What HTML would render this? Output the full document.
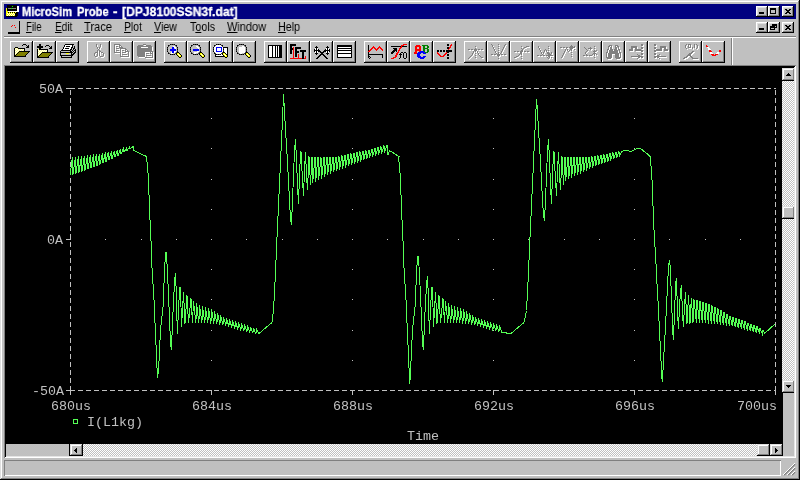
<!DOCTYPE html>
<html><head><meta charset="utf-8"><title>MicroSim Probe</title>
<style>
*{margin:0;padding:0;box-sizing:border-box}
html,body{width:800px;height:480px;overflow:hidden;background:#c0c0c0}
body{position:relative;font-family:"Liberation Sans",sans-serif;font-size:12.5px;color:#000}
.a{position:absolute}
.t{position:absolute;white-space:nowrap;transform-origin:0 0;line-height:1;will-change:transform}
.btn{position:absolute;background:#c0c0c0;box-shadow:inset -1px -1px 0 #000,inset 1px 1px 0 #fff,inset -2px -2px 0 #808080,inset 2px 2px 0 #dfdfdf}
.tb{position:absolute;top:41px;width:23px;height:22px;background:#c0c0c0;box-shadow:inset -1px -1px 0 #000,inset 1px 1px 0 #fff,inset -2px -2px 0 #808080}
.tb svg{position:absolute;left:4px;top:3px;width:16px;height:15px;overflow:visible}
.sb{position:absolute;background:#c0c0c0;box-shadow:inset -1px -1px 0 #000,inset 1px 1px 0 #dfdfdf,inset -2px -2px 0 #808080,inset 2px 2px 0 #fff}
.dither{position:absolute;background-color:#fff;background-image:conic-gradient(#c0c0c0 25%,#fff 0 50%,#c0c0c0 0 75%,#fff 0);background-size:2px 2px}
u{text-decoration:underline;text-underline-offset:1px}
.p{font-family:"Liberation Mono",monospace;font-size:13.33px;color:#c0c0c0}
</style></head>
<body>
<div class="a" style="left:0;top:0;width:800px;height:480px;box-shadow:inset -1px -1px 0 #000,inset 1px 1px 0 #dfdfdf,inset -2px -2px 0 #808080,inset 2px 2px 0 #fff"></div>
<div class="a" style="left:4px;top:4px;width:792px;height:15px;background:#000080"></div>
<svg class="a" style="left:5px;top:4px" width="15" height="14" viewBox="0 0 15 14" shape-rendering="crispEdges"><rect x="2" y="1" width="10" height="1" fill="#000"/><rect x="2" y="2" width="5" height="1" fill="#000"/><rect x="7" y="2" width="1" height="1" fill="#00ff00"/><rect x="8" y="2" width="4" height="1" fill="#000"/><rect x="12" y="2" width="2" height="1" fill="#fff"/><rect x="2" y="3" width="10" height="1" fill="#000"/><rect x="12" y="3" width="2" height="1" fill="#fff"/><rect x="1" y="4" width="1" height="1" fill="#ffff00"/><rect x="2" y="4" width="1" height="1" fill="#000"/><rect x="3" y="4" width="3" height="1" fill="#808080"/><rect x="6" y="4" width="1" height="1" fill="#00ff00"/><rect x="7" y="4" width="4" height="1" fill="#808080"/><rect x="11" y="4" width="1" height="1" fill="#000"/><rect x="12" y="4" width="2" height="1" fill="#fff"/><rect x="1" y="5" width="1" height="1" fill="#ffff00"/><rect x="2" y="5" width="10" height="1" fill="#000"/><rect x="12" y="5" width="2" height="1" fill="#fff"/><rect x="1" y="6" width="1" height="1" fill="#ffff00"/><rect x="2" y="6" width="10" height="1" fill="#000"/><rect x="12" y="6" width="2" height="1" fill="#fff"/><rect x="1" y="7" width="2" height="1" fill="#ffff00"/><rect x="3" y="7" width="11" height="1" fill="#fff"/><rect x="1" y="8" width="2" height="1" fill="#ffff00"/><rect x="3" y="8" width="1" height="1" fill="#000"/><rect x="4" y="8" width="1" height="1" fill="#ffff00"/><rect x="5" y="8" width="1" height="1" fill="#000"/><rect x="6" y="8" width="1" height="1" fill="#ffff00"/><rect x="7" y="8" width="1" height="1" fill="#000"/><rect x="8" y="8" width="1" height="1" fill="#ffff00"/><rect x="9" y="8" width="1" height="1" fill="#000"/><rect x="10" y="8" width="1" height="1" fill="#ffff00"/><rect x="11" y="8" width="2" height="1" fill="#000"/><rect x="1" y="9" width="1" height="1" fill="#ffff00"/><rect x="2" y="9" width="1" height="1" fill="#fff"/><rect x="3" y="9" width="1" height="1" fill="#ffff00"/><rect x="4" y="9" width="1" height="1" fill="#fff"/><rect x="5" y="9" width="1" height="1" fill="#ffff00"/><rect x="6" y="9" width="1" height="1" fill="#fff"/><rect x="7" y="9" width="1" height="1" fill="#ffff00"/><rect x="8" y="9" width="1" height="1" fill="#fff"/><rect x="9" y="9" width="1" height="1" fill="#ffff00"/><rect x="10" y="9" width="3" height="1" fill="#000"/><rect x="1" y="10" width="2" height="1" fill="#ffff00"/><rect x="3" y="10" width="1" height="1" fill="#fff"/><rect x="4" y="10" width="1" height="1" fill="#ffff00"/><rect x="5" y="10" width="1" height="1" fill="#fff"/><rect x="6" y="10" width="1" height="1" fill="#ffff00"/><rect x="7" y="10" width="1" height="1" fill="#fff"/><rect x="8" y="10" width="1" height="1" fill="#ffff00"/><rect x="9" y="10" width="1" height="1" fill="#fff"/><rect x="10" y="10" width="3" height="1" fill="#000"/><rect x="1" y="11" width="1" height="1" fill="#ffff00"/><rect x="2" y="11" width="1" height="1" fill="#fff"/><rect x="3" y="11" width="1" height="1" fill="#ffff00"/><rect x="4" y="11" width="1" height="1" fill="#fff"/><rect x="5" y="11" width="1" height="1" fill="#ffff00"/><rect x="6" y="11" width="1" height="1" fill="#fff"/><rect x="7" y="11" width="1" height="1" fill="#ffff00"/><rect x="8" y="11" width="1" height="1" fill="#fff"/><rect x="9" y="11" width="1" height="1" fill="#ffff00"/><rect x="10" y="11" width="3" height="1" fill="#000"/><rect x="1" y="12" width="11" height="1" fill="#000"/></svg>
<div class="t" style="left:21.8px;top:6px;color:#fff;font-weight:bold;font-size:12.5px;-webkit-text-stroke:0.3px #fff;transform:scaleX(0.8886)">MicroSim</div>
<div class="t" style="left:77.3px;top:6px;color:#fff;font-weight:bold;font-size:12.5px;-webkit-text-stroke:0.3px #fff;transform:scaleX(0.8945)">Probe</div>
<div class="t" style="left:112.5px;top:6px;color:#fff;font-weight:bold;font-size:12.5px;-webkit-text-stroke:0.3px #fff;transform:scaleX(1.0791)">-</div>
<div class="t" style="left:122.3px;top:6px;color:#fff;font-weight:bold;font-size:12.5px;-webkit-text-stroke:0.3px #fff;transform:scaleX(0.9682)">[DPJ8100SSN3f.dat]</div>
<div class="btn" style="left:756px;top:6px;width:12px;height:11px"><div class="a" style="left:3px;top:6px;width:5px;height:2px;background:#000"></div></div>
<div class="btn" style="left:768px;top:6px;width:12px;height:11px"><div class="a" style="left:2px;top:2px;width:6px;height:6px;border:1px solid #000;border-top-width:2px"></div></div>
<div class="btn" style="left:782px;top:6px;width:12px;height:11px"><svg class="a" style="left:3px;top:3px" width="6" height="5" viewBox="0 0 6 5" shape-rendering="crispEdges"><path d="M0 0h2v1h-2zM4 0h2v1h-2zM1 1h4v1h-4zM2 2h2v1h-2zM1 3h4v1h-4zM0 4h2v1h-2zM4 4h2v1h-2z" fill="#000"/></svg></div>
<div class="btn" style="left:756px;top:22px;width:12px;height:11px"><div class="a" style="left:3px;top:6px;width:5px;height:2px;background:#000"></div></div>
<div class="btn" style="left:768px;top:22px;width:12px;height:11px"><div class="a" style="left:4px;top:2px;width:5px;height:4px;border:1px solid #000;border-top-width:2px"></div><div class="a" style="left:2px;top:4px;width:5px;height:4px;border:1px solid #000;border-top-width:2px;background:#c0c0c0"></div></div>
<div class="btn" style="left:782px;top:22px;width:12px;height:11px"><svg class="a" style="left:3px;top:3px" width="6" height="5" viewBox="0 0 6 5" shape-rendering="crispEdges"><path d="M0 0h2v1h-2zM4 0h2v1h-2zM1 1h4v1h-4zM2 2h2v1h-2zM1 3h4v1h-4zM0 4h2v1h-2zM4 4h2v1h-2z" fill="#000"/></svg></div>
<svg class="a" style="left:6px;top:20px" width="15" height="15" viewBox="0 0 15 15" shape-rendering="crispEdges">
<rect x="13" y="1" width="1" height="13" fill="#000"/><rect x="2" y="12" width="12" height="2" fill="#000"/>
<rect x="5" y="6" width="1" height="1" fill="#f00"/><rect x="6" y="5" width="1" height="1" fill="#f00"/><rect x="8" y="5" width="1" height="1" fill="#f00"/><rect x="9" y="7" width="1" height="1" fill="#f00"/>
</svg>
<div class="t m" id="m0" style="left:26.4px;top:21px;transform:scaleX(0.7688)"><u>F</u>ile</div>
<div class="t m" id="m1" style="left:54.5px;top:21px;transform:scaleX(0.8121)"><u>E</u>dit</div>
<div class="t m" id="m2" style="left:84px;top:21px;transform:scaleX(0.8889)"><u>T</u>race</div>
<div class="t m" id="m3" style="left:124.3px;top:21px;transform:scaleX(0.8353)"><u>P</u>lot</div>
<div class="t m" id="m4" style="left:154px;top:21px;transform:scaleX(0.8557)"><u>V</u>iew</div>
<div class="t m" id="m5" style="left:190px;top:21px;transform:scaleX(0.8565)">T<u>o</u>ols</div>
<div class="t m" id="m6" style="left:227px;top:21px;transform:scaleX(0.8770)"><u>W</u>indow</div>
<div class="t m" id="m7" style="left:278px;top:21px;transform:scaleX(0.8554)"><u>H</u>elp</div>
<div class="a" style="left:4px;top:36px;width:792px;height:1px;background:#808080"></div><div class="a" style="left:4px;top:37px;width:792px;height:1px;background:#fff"></div>
<div class="a" style="left:731px;top:38px;width:1px;height:27px;background:#808080"></div><div class="a" style="left:732px;top:38px;width:1px;height:27px;background:#fff"></div>
<div class="tb" style="left:10px"><svg viewBox="0 0 16 15" shape-rendering="crispEdges"><rect x="9" y="0" width="3" height="1" fill="#000"/><rect x="8" y="1" width="1" height="1" fill="#000"/><rect x="12" y="1" width="1" height="1" fill="#000"/><rect x="14" y="1" width="1" height="1" fill="#000"/><rect x="13" y="2" width="2" height="1" fill="#000"/><rect x="1" y="3" width="3" height="1" fill="#000"/><rect x="12" y="3" width="3" height="1" fill="#000"/><rect x="0" y="4" width="1" height="1" fill="#000"/><rect x="1" y="4" width="1" height="1" fill="#ffff80"/><rect x="2" y="4" width="1" height="1" fill="#fff"/><rect x="3" y="4" width="1" height="1" fill="#ffff80"/><rect x="4" y="4" width="7" height="1" fill="#000"/><rect x="0" y="5" width="1" height="1" fill="#000"/><rect x="1" y="5" width="1" height="1" fill="#fff"/><rect x="2" y="5" width="1" height="1" fill="#ffff80"/><rect x="3" y="5" width="1" height="1" fill="#fff"/><rect x="4" y="5" width="1" height="1" fill="#ffff80"/><rect x="5" y="5" width="1" height="1" fill="#fff"/><rect x="6" y="5" width="1" height="1" fill="#ffff80"/><rect x="7" y="5" width="1" height="1" fill="#fff"/><rect x="8" y="5" width="1" height="1" fill="#ffff80"/><rect x="9" y="5" width="1" height="1" fill="#fff"/><rect x="10" y="5" width="1" height="1" fill="#000"/><rect x="0" y="6" width="1" height="1" fill="#000"/><rect x="1" y="6" width="1" height="1" fill="#ffff80"/><rect x="2" y="6" width="1" height="1" fill="#fff"/><rect x="3" y="6" width="1" height="1" fill="#ffff80"/><rect x="4" y="6" width="1" height="1" fill="#fff"/><rect x="5" y="6" width="1" height="1" fill="#ffff80"/><rect x="6" y="6" width="1" height="1" fill="#fff"/><rect x="7" y="6" width="1" height="1" fill="#ffff80"/><rect x="8" y="6" width="1" height="1" fill="#fff"/><rect x="9" y="6" width="1" height="1" fill="#ffff80"/><rect x="10" y="6" width="1" height="1" fill="#000"/><rect x="0" y="7" width="1" height="1" fill="#000"/><rect x="1" y="7" width="1" height="1" fill="#fff"/><rect x="2" y="7" width="1" height="1" fill="#ffff80"/><rect x="3" y="7" width="1" height="1" fill="#fff"/><rect x="4" y="7" width="1" height="1" fill="#ffff80"/><rect x="5" y="7" width="11" height="1" fill="#000"/><rect x="0" y="8" width="1" height="1" fill="#000"/><rect x="1" y="8" width="1" height="1" fill="#ffff80"/><rect x="2" y="8" width="1" height="1" fill="#fff"/><rect x="3" y="8" width="1" height="1" fill="#ffff80"/><rect x="4" y="8" width="1" height="1" fill="#000"/><rect x="5" y="8" width="9" height="1" fill="#808000"/><rect x="14" y="8" width="1" height="1" fill="#000"/><rect x="0" y="9" width="1" height="1" fill="#000"/><rect x="1" y="9" width="1" height="1" fill="#fff"/><rect x="2" y="9" width="1" height="1" fill="#ffff80"/><rect x="3" y="9" width="1" height="1" fill="#000"/><rect x="4" y="9" width="9" height="1" fill="#808000"/><rect x="13" y="9" width="1" height="1" fill="#000"/><rect x="0" y="10" width="1" height="1" fill="#000"/><rect x="1" y="10" width="1" height="1" fill="#ffff80"/><rect x="2" y="10" width="1" height="1" fill="#000"/><rect x="3" y="10" width="9" height="1" fill="#808000"/><rect x="12" y="10" width="1" height="1" fill="#000"/><rect x="0" y="11" width="2" height="1" fill="#000"/><rect x="2" y="11" width="9" height="1" fill="#808000"/><rect x="11" y="11" width="1" height="1" fill="#000"/><rect x="0" y="12" width="12" height="1" fill="#000"/></svg></div>
<div class="tb" style="left:33px"><svg viewBox="0 0 16 15" shape-rendering="crispEdges"><rect x="2" y="0" width="2" height="1" fill="#000"/><rect x="2" y="1" width="2" height="1" fill="#000"/><rect x="9" y="1" width="3" height="1" fill="#000"/><rect x="0" y="2" width="6" height="1" fill="#000"/><rect x="8" y="2" width="1" height="1" fill="#000"/><rect x="12" y="2" width="1" height="1" fill="#000"/><rect x="14" y="2" width="1" height="1" fill="#000"/><rect x="0" y="3" width="6" height="1" fill="#000"/><rect x="13" y="3" width="2" height="1" fill="#000"/><rect x="2" y="4" width="2" height="1" fill="#000"/><rect x="12" y="4" width="3" height="1" fill="#000"/><rect x="0" y="5" width="1" height="1" fill="#000"/><rect x="1" y="5" width="1" height="1" fill="#ffff80"/><rect x="2" y="5" width="9" height="1" fill="#000"/><rect x="0" y="6" width="1" height="1" fill="#000"/><rect x="1" y="6" width="1" height="1" fill="#fff"/><rect x="2" y="6" width="1" height="1" fill="#ffff80"/><rect x="3" y="6" width="1" height="1" fill="#fff"/><rect x="4" y="6" width="1" height="1" fill="#ffff80"/><rect x="5" y="6" width="1" height="1" fill="#fff"/><rect x="6" y="6" width="1" height="1" fill="#ffff80"/><rect x="7" y="6" width="1" height="1" fill="#fff"/><rect x="8" y="6" width="1" height="1" fill="#ffff80"/><rect x="9" y="6" width="1" height="1" fill="#fff"/><rect x="10" y="6" width="1" height="1" fill="#000"/><rect x="0" y="7" width="1" height="1" fill="#000"/><rect x="1" y="7" width="1" height="1" fill="#ffff80"/><rect x="2" y="7" width="1" height="1" fill="#fff"/><rect x="3" y="7" width="1" height="1" fill="#ffff80"/><rect x="4" y="7" width="1" height="1" fill="#fff"/><rect x="5" y="7" width="1" height="1" fill="#ffff80"/><rect x="6" y="7" width="1" height="1" fill="#fff"/><rect x="7" y="7" width="1" height="1" fill="#ffff80"/><rect x="8" y="7" width="1" height="1" fill="#fff"/><rect x="9" y="7" width="1" height="1" fill="#ffff80"/><rect x="10" y="7" width="1" height="1" fill="#000"/><rect x="0" y="8" width="1" height="1" fill="#000"/><rect x="1" y="8" width="1" height="1" fill="#fff"/><rect x="2" y="8" width="1" height="1" fill="#ffff80"/><rect x="3" y="8" width="1" height="1" fill="#fff"/><rect x="4" y="8" width="1" height="1" fill="#ffff80"/><rect x="5" y="8" width="11" height="1" fill="#000"/><rect x="0" y="9" width="1" height="1" fill="#000"/><rect x="1" y="9" width="1" height="1" fill="#ffff80"/><rect x="2" y="9" width="1" height="1" fill="#fff"/><rect x="3" y="9" width="1" height="1" fill="#ffff80"/><rect x="4" y="9" width="1" height="1" fill="#000"/><rect x="5" y="9" width="9" height="1" fill="#808000"/><rect x="14" y="9" width="1" height="1" fill="#000"/><rect x="0" y="10" width="1" height="1" fill="#000"/><rect x="1" y="10" width="1" height="1" fill="#fff"/><rect x="2" y="10" width="1" height="1" fill="#ffff80"/><rect x="3" y="10" width="1" height="1" fill="#000"/><rect x="4" y="10" width="9" height="1" fill="#808000"/><rect x="13" y="10" width="1" height="1" fill="#000"/><rect x="0" y="11" width="1" height="1" fill="#000"/><rect x="1" y="11" width="1" height="1" fill="#ffff80"/><rect x="2" y="11" width="1" height="1" fill="#000"/><rect x="3" y="11" width="9" height="1" fill="#808000"/><rect x="12" y="11" width="1" height="1" fill="#000"/><rect x="0" y="12" width="2" height="1" fill="#000"/><rect x="2" y="12" width="9" height="1" fill="#808000"/><rect x="11" y="12" width="1" height="1" fill="#000"/><rect x="0" y="13" width="12" height="1" fill="#000"/></svg></div>
<div class="tb" style="left:56px"><svg viewBox="0 0 16 15" shape-rendering="crispEdges"><rect x="5" y="0" width="9" height="1" fill="#000"/><rect x="4" y="1" width="1" height="1" fill="#000"/><rect x="5" y="1" width="7" height="1" fill="#fff"/><rect x="12" y="1" width="1" height="1" fill="#000"/><rect x="4" y="2" width="1" height="1" fill="#000"/><rect x="5" y="2" width="1" height="1" fill="#fff"/><rect x="6" y="2" width="4" height="1" fill="#000"/><rect x="10" y="2" width="2" height="1" fill="#fff"/><rect x="12" y="2" width="1" height="1" fill="#000"/><rect x="14" y="2" width="1" height="1" fill="#000"/><rect x="3" y="3" width="1" height="1" fill="#000"/><rect x="4" y="3" width="7" height="1" fill="#fff"/><rect x="11" y="3" width="2" height="1" fill="#000"/><rect x="13" y="3" width="1" height="1" fill="#c0c0c0"/><rect x="14" y="3" width="1" height="1" fill="#000"/><rect x="3" y="4" width="1" height="1" fill="#000"/><rect x="4" y="4" width="1" height="1" fill="#fff"/><rect x="5" y="4" width="4" height="1" fill="#000"/><rect x="9" y="4" width="2" height="1" fill="#fff"/><rect x="11" y="4" width="1" height="1" fill="#000"/><rect x="12" y="4" width="1" height="1" fill="#c0c0c0"/><rect x="13" y="4" width="2" height="1" fill="#000"/><rect x="2" y="5" width="1" height="1" fill="#000"/><rect x="3" y="5" width="7" height="1" fill="#fff"/><rect x="10" y="5" width="2" height="1" fill="#000"/><rect x="12" y="5" width="1" height="1" fill="#c0c0c0"/><rect x="13" y="5" width="1" height="1" fill="#000"/><rect x="14" y="5" width="1" height="1" fill="#c0c0c0"/><rect x="15" y="5" width="1" height="1" fill="#000"/><rect x="1" y="6" width="10" height="1" fill="#000"/><rect x="11" y="6" width="1" height="1" fill="#c0c0c0"/><rect x="12" y="6" width="1" height="1" fill="#000"/><rect x="13" y="6" width="1" height="1" fill="#c0c0c0"/><rect x="14" y="6" width="2" height="1" fill="#000"/><rect x="0" y="7" width="1" height="1" fill="#000"/><rect x="1" y="7" width="9" height="1" fill="#c0c0c0"/><rect x="10" y="7" width="2" height="1" fill="#000"/><rect x="12" y="7" width="1" height="1" fill="#c0c0c0"/><rect x="13" y="7" width="1" height="1" fill="#000"/><rect x="14" y="7" width="1" height="1" fill="#c0c0c0"/><rect x="15" y="7" width="1" height="1" fill="#000"/><rect x="0" y="8" width="13" height="1" fill="#000"/><rect x="13" y="8" width="1" height="1" fill="#c0c0c0"/><rect x="14" y="8" width="2" height="1" fill="#000"/><rect x="0" y="9" width="1" height="1" fill="#000"/><rect x="1" y="9" width="5" height="1" fill="#c0c0c0"/><rect x="6" y="9" width="3" height="1" fill="#ffff00"/><rect x="9" y="9" width="2" height="1" fill="#c0c0c0"/><rect x="11" y="9" width="1" height="1" fill="#000"/><rect x="12" y="9" width="1" height="1" fill="#c0c0c0"/><rect x="13" y="9" width="2" height="1" fill="#000"/><rect x="0" y="10" width="1" height="1" fill="#000"/><rect x="1" y="10" width="10" height="1" fill="#c0c0c0"/><rect x="11" y="10" width="3" height="1" fill="#000"/><rect x="0" y="11" width="13" height="1" fill="#000"/><rect x="1" y="12" width="1" height="1" fill="#000"/><rect x="2" y="12" width="9" height="1" fill="#c0c0c0"/><rect x="11" y="12" width="1" height="1" fill="#000"/><rect x="1" y="13" width="11" height="1" fill="#000"/></svg></div>
<div class="tb" style="left:87px"><svg viewBox="0 0 16 15" shape-rendering="crispEdges"><rect x="5" y="0" width="1" height="1" fill="#808080"/><rect x="9" y="0" width="1" height="1" fill="#808080"/><rect x="5" y="1" width="1" height="1" fill="#808080"/><rect x="6" y="1" width="1" height="1" fill="#fff"/><rect x="9" y="1" width="1" height="1" fill="#808080"/><rect x="10" y="1" width="1" height="1" fill="#fff"/><rect x="5" y="2" width="1" height="1" fill="#808080"/><rect x="6" y="2" width="1" height="1" fill="#fff"/><rect x="9" y="2" width="1" height="1" fill="#808080"/><rect x="10" y="2" width="1" height="1" fill="#fff"/><rect x="6" y="3" width="1" height="1" fill="#808080"/><rect x="8" y="3" width="1" height="1" fill="#808080"/><rect x="10" y="3" width="1" height="1" fill="#fff"/><rect x="6" y="4" width="1" height="1" fill="#808080"/><rect x="7" y="4" width="1" height="1" fill="#fff"/><rect x="8" y="4" width="1" height="1" fill="#808080"/><rect x="9" y="4" width="1" height="1" fill="#fff"/><rect x="7" y="5" width="1" height="1" fill="#808080"/><rect x="9" y="5" width="1" height="1" fill="#fff"/><rect x="6" y="6" width="1" height="1" fill="#808080"/><rect x="8" y="6" width="1" height="1" fill="#808080"/><rect x="6" y="7" width="1" height="1" fill="#808080"/><rect x="7" y="7" width="1" height="1" fill="#fff"/><rect x="8" y="7" width="2" height="1" fill="#808080"/><rect x="4" y="8" width="3" height="1" fill="#808080"/><rect x="7" y="8" width="1" height="1" fill="#fff"/><rect x="8" y="8" width="1" height="1" fill="#808080"/><rect x="9" y="8" width="1" height="1" fill="#fff"/><rect x="10" y="8" width="2" height="1" fill="#808080"/><rect x="3" y="9" width="1" height="1" fill="#808080"/><rect x="5" y="9" width="1" height="1" fill="#fff"/><rect x="6" y="9" width="1" height="1" fill="#808080"/><rect x="7" y="9" width="1" height="1" fill="#fff"/><rect x="8" y="9" width="1" height="1" fill="#808080"/><rect x="9" y="9" width="1" height="1" fill="#fff"/><rect x="11" y="9" width="1" height="1" fill="#fff"/><rect x="12" y="9" width="1" height="1" fill="#808080"/><rect x="3" y="10" width="1" height="1" fill="#808080"/><rect x="4" y="10" width="1" height="1" fill="#fff"/><rect x="6" y="10" width="1" height="1" fill="#808080"/><rect x="7" y="10" width="1" height="1" fill="#fff"/><rect x="8" y="10" width="1" height="1" fill="#808080"/><rect x="9" y="10" width="1" height="1" fill="#fff"/><rect x="12" y="10" width="1" height="1" fill="#808080"/><rect x="13" y="10" width="1" height="1" fill="#fff"/><rect x="3" y="11" width="1" height="1" fill="#808080"/><rect x="4" y="11" width="1" height="1" fill="#fff"/><rect x="6" y="11" width="1" height="1" fill="#808080"/><rect x="7" y="11" width="1" height="1" fill="#fff"/><rect x="8" y="11" width="1" height="1" fill="#808080"/><rect x="9" y="11" width="1" height="1" fill="#fff"/><rect x="12" y="11" width="1" height="1" fill="#808080"/><rect x="13" y="11" width="1" height="1" fill="#fff"/><rect x="4" y="12" width="2" height="1" fill="#808080"/><rect x="7" y="12" width="1" height="1" fill="#fff"/><rect x="9" y="12" width="3" height="1" fill="#808080"/><rect x="13" y="12" width="1" height="1" fill="#fff"/><rect x="5" y="13" width="2" height="1" fill="#fff"/><rect x="10" y="13" width="3" height="1" fill="#fff"/></svg></div>
<div class="tb" style="left:110px"><svg viewBox="0 0 16 15" shape-rendering="crispEdges"><rect x="0" y="0" width="6" height="1" fill="#808080"/><rect x="0" y="1" width="1" height="1" fill="#808080"/><rect x="1" y="1" width="4" height="1" fill="#fff"/><rect x="5" y="1" width="2" height="1" fill="#808080"/><rect x="0" y="2" width="1" height="1" fill="#808080"/><rect x="1" y="2" width="1" height="1" fill="#fff"/><rect x="2" y="2" width="2" height="1" fill="#808080"/><rect x="5" y="2" width="1" height="1" fill="#808080"/><rect x="6" y="2" width="1" height="1" fill="#fff"/><rect x="7" y="2" width="1" height="1" fill="#808080"/><rect x="0" y="3" width="1" height="1" fill="#808080"/><rect x="1" y="3" width="1" height="1" fill="#fff"/><rect x="3" y="3" width="2" height="1" fill="#fff"/><rect x="5" y="3" width="4" height="1" fill="#808080"/><rect x="0" y="4" width="1" height="1" fill="#808080"/><rect x="1" y="4" width="1" height="1" fill="#fff"/><rect x="2" y="4" width="3" height="1" fill="#808080"/><rect x="6" y="4" width="6" height="1" fill="#808080"/><rect x="0" y="5" width="1" height="1" fill="#808080"/><rect x="1" y="5" width="1" height="1" fill="#fff"/><rect x="3" y="5" width="3" height="1" fill="#fff"/><rect x="6" y="5" width="1" height="1" fill="#808080"/><rect x="7" y="5" width="4" height="1" fill="#fff"/><rect x="11" y="5" width="2" height="1" fill="#808080"/><rect x="0" y="6" width="1" height="1" fill="#808080"/><rect x="1" y="6" width="1" height="1" fill="#fff"/><rect x="2" y="6" width="3" height="1" fill="#808080"/><rect x="6" y="6" width="1" height="1" fill="#808080"/><rect x="7" y="6" width="1" height="1" fill="#fff"/><rect x="8" y="6" width="2" height="1" fill="#808080"/><rect x="11" y="6" width="1" height="1" fill="#808080"/><rect x="12" y="6" width="1" height="1" fill="#fff"/><rect x="13" y="6" width="1" height="1" fill="#808080"/><rect x="0" y="7" width="1" height="1" fill="#808080"/><rect x="1" y="7" width="1" height="1" fill="#fff"/><rect x="3" y="7" width="3" height="1" fill="#fff"/><rect x="6" y="7" width="1" height="1" fill="#808080"/><rect x="7" y="7" width="1" height="1" fill="#fff"/><rect x="9" y="7" width="2" height="1" fill="#fff"/><rect x="11" y="7" width="4" height="1" fill="#808080"/><rect x="0" y="8" width="7" height="1" fill="#808080"/><rect x="7" y="8" width="1" height="1" fill="#fff"/><rect x="8" y="8" width="4" height="1" fill="#808080"/><rect x="12" y="8" width="2" height="1" fill="#fff"/><rect x="14" y="8" width="1" height="1" fill="#808080"/><rect x="15" y="8" width="1" height="1" fill="#fff"/><rect x="1" y="9" width="5" height="1" fill="#fff"/><rect x="6" y="9" width="1" height="1" fill="#808080"/><rect x="7" y="9" width="1" height="1" fill="#fff"/><rect x="9" y="9" width="4" height="1" fill="#fff"/><rect x="14" y="9" width="1" height="1" fill="#808080"/><rect x="15" y="9" width="1" height="1" fill="#fff"/><rect x="6" y="10" width="1" height="1" fill="#808080"/><rect x="7" y="10" width="1" height="1" fill="#fff"/><rect x="8" y="10" width="5" height="1" fill="#808080"/><rect x="14" y="10" width="1" height="1" fill="#808080"/><rect x="15" y="10" width="1" height="1" fill="#fff"/><rect x="6" y="11" width="1" height="1" fill="#808080"/><rect x="7" y="11" width="1" height="1" fill="#fff"/><rect x="9" y="11" width="5" height="1" fill="#fff"/><rect x="14" y="11" width="1" height="1" fill="#808080"/><rect x="15" y="11" width="1" height="1" fill="#fff"/><rect x="6" y="12" width="9" height="1" fill="#808080"/><rect x="15" y="12" width="1" height="1" fill="#fff"/><rect x="7" y="13" width="9" height="1" fill="#fff"/></svg></div>
<div class="tb" style="left:133px"><svg viewBox="0 0 16 15" shape-rendering="crispEdges"><rect x="6" y="0" width="3" height="1" fill="#808080"/><rect x="1" y="1" width="5" height="1" fill="#808080"/><rect x="7" y="1" width="2" height="1" fill="#fff"/><rect x="9" y="1" width="5" height="1" fill="#808080"/><rect x="0" y="2" width="15" height="1" fill="#808080"/><rect x="0" y="3" width="4" height="1" fill="#808080"/><rect x="4" y="3" width="7" height="1" fill="#fff"/><rect x="11" y="3" width="4" height="1" fill="#808080"/><rect x="15" y="3" width="1" height="1" fill="#fff"/><rect x="0" y="4" width="15" height="1" fill="#808080"/><rect x="15" y="4" width="1" height="1" fill="#fff"/><rect x="0" y="5" width="15" height="1" fill="#808080"/><rect x="15" y="5" width="1" height="1" fill="#fff"/><rect x="0" y="6" width="15" height="1" fill="#808080"/><rect x="15" y="6" width="1" height="1" fill="#fff"/><rect x="0" y="7" width="16" height="1" fill="#808080"/><rect x="0" y="8" width="8" height="1" fill="#808080"/><rect x="8" y="8" width="5" height="1" fill="#fff"/><rect x="13" y="8" width="1" height="1" fill="#808080"/><rect x="14" y="8" width="1" height="1" fill="#fff"/><rect x="15" y="8" width="1" height="1" fill="#808080"/><rect x="16" y="8" width="1" height="1" fill="#fff"/><rect x="0" y="9" width="8" height="1" fill="#808080"/><rect x="8" y="9" width="1" height="1" fill="#fff"/><rect x="9" y="9" width="3" height="1" fill="#808080"/><rect x="13" y="9" width="3" height="1" fill="#808080"/><rect x="16" y="9" width="1" height="1" fill="#fff"/><rect x="0" y="10" width="8" height="1" fill="#808080"/><rect x="8" y="10" width="1" height="1" fill="#fff"/><rect x="10" y="10" width="3" height="1" fill="#fff"/><rect x="14" y="10" width="1" height="1" fill="#fff"/><rect x="15" y="10" width="1" height="1" fill="#808080"/><rect x="16" y="10" width="1" height="1" fill="#fff"/><rect x="0" y="11" width="8" height="1" fill="#808080"/><rect x="8" y="11" width="1" height="1" fill="#fff"/><rect x="9" y="11" width="5" height="1" fill="#808080"/><rect x="15" y="11" width="1" height="1" fill="#808080"/><rect x="16" y="11" width="1" height="1" fill="#fff"/><rect x="1" y="12" width="7" height="1" fill="#808080"/><rect x="8" y="12" width="1" height="1" fill="#fff"/><rect x="10" y="12" width="5" height="1" fill="#fff"/><rect x="15" y="12" width="1" height="1" fill="#808080"/><rect x="16" y="12" width="1" height="1" fill="#fff"/><rect x="2" y="13" width="6" height="1" fill="#fff"/><rect x="8" y="13" width="8" height="1" fill="#808080"/><rect x="16" y="13" width="1" height="1" fill="#fff"/><rect x="9" y="14" width="8" height="1" fill="#fff"/></svg></div>
<div class="tb" style="left:164px"><svg viewBox="0 0 16 15" shape-rendering="crispEdges"><g transform="translate(-1,0)"><rect x="3" y="0" width="1" height="1" fill="#000"/><rect x="4" y="0" width="1" height="1" fill="#404040"/><rect x="5" y="0" width="1" height="1" fill="#000"/><rect x="6" y="0" width="1" height="1" fill="#404040"/><rect x="7" y="0" width="1" height="1" fill="#000"/><rect x="1" y="1" width="1" height="1" fill="#000"/><rect x="2" y="1" width="1" height="1" fill="#404040"/><rect x="8" y="1" width="1" height="1" fill="#404040"/><rect x="9" y="1" width="1" height="1" fill="#000"/><rect x="1" y="2" width="1" height="1" fill="#404040"/><rect x="6" y="2" width="2" height="1" fill="#fff"/><rect x="9" y="2" width="1" height="1" fill="#404040"/><rect x="0" y="3" width="1" height="1" fill="#000"/><rect x="5" y="3" width="2" height="1" fill="#0000ff"/><rect x="7" y="3" width="2" height="1" fill="#fff"/><rect x="10" y="3" width="1" height="1" fill="#000"/><rect x="0" y="4" width="1" height="1" fill="#404040"/><rect x="5" y="4" width="2" height="1" fill="#0000ff"/><rect x="8" y="4" width="1" height="1" fill="#fff"/><rect x="10" y="4" width="1" height="1" fill="#404040"/><rect x="0" y="5" width="1" height="1" fill="#000"/><rect x="3" y="5" width="6" height="1" fill="#0000ff"/><rect x="10" y="5" width="1" height="1" fill="#000"/><rect x="0" y="6" width="1" height="1" fill="#404040"/><rect x="3" y="6" width="6" height="1" fill="#0000ff"/><rect x="10" y="6" width="1" height="1" fill="#404040"/><rect x="0" y="7" width="1" height="1" fill="#000"/><rect x="5" y="7" width="2" height="1" fill="#0000ff"/><rect x="7" y="7" width="2" height="1" fill="#fff"/><rect x="10" y="7" width="1" height="1" fill="#000"/><rect x="1" y="8" width="1" height="1" fill="#404040"/><rect x="4" y="8" width="1" height="1" fill="#fff"/><rect x="5" y="8" width="2" height="1" fill="#0000ff"/><rect x="7" y="8" width="1" height="1" fill="#fff"/><rect x="9" y="8" width="1" height="1" fill="#404040"/><rect x="10" y="8" width="2" height="1" fill="#000"/><rect x="1" y="9" width="1" height="1" fill="#000"/><rect x="2" y="9" width="1" height="1" fill="#404040"/><rect x="4" y="9" width="2" height="1" fill="#fff"/><rect x="8" y="9" width="1" height="1" fill="#404040"/><rect x="9" y="9" width="1" height="1" fill="#000"/><rect x="10" y="9" width="2" height="1" fill="#ffff00"/><rect x="12" y="9" width="1" height="1" fill="#000"/><rect x="3" y="10" width="1" height="1" fill="#000"/><rect x="4" y="10" width="1" height="1" fill="#404040"/><rect x="5" y="10" width="1" height="1" fill="#000"/><rect x="6" y="10" width="1" height="1" fill="#404040"/><rect x="7" y="10" width="1" height="1" fill="#000"/><rect x="9" y="10" width="1" height="1" fill="#000"/><rect x="10" y="10" width="1" height="1" fill="#ffff00"/><rect x="11" y="10" width="1" height="1" fill="#fff"/><rect x="12" y="10" width="1" height="1" fill="#ffff00"/><rect x="13" y="10" width="1" height="1" fill="#000"/><rect x="10" y="11" width="1" height="1" fill="#000"/><rect x="11" y="11" width="1" height="1" fill="#ffff00"/><rect x="12" y="11" width="1" height="1" fill="#fff"/><rect x="13" y="11" width="1" height="1" fill="#ffff00"/><rect x="14" y="11" width="1" height="1" fill="#000"/><rect x="11" y="12" width="1" height="1" fill="#000"/><rect x="12" y="12" width="2" height="1" fill="#ffff00"/><rect x="14" y="12" width="1" height="1" fill="#000"/><rect x="12" y="13" width="2" height="1" fill="#000"/></g></svg></div>
<div class="tb" style="left:187px"><svg viewBox="0 0 16 15" shape-rendering="crispEdges"><g transform="translate(-1,0)"><rect x="3" y="0" width="1" height="1" fill="#000"/><rect x="4" y="0" width="1" height="1" fill="#404040"/><rect x="5" y="0" width="1" height="1" fill="#000"/><rect x="6" y="0" width="1" height="1" fill="#404040"/><rect x="7" y="0" width="1" height="1" fill="#000"/><rect x="1" y="1" width="1" height="1" fill="#000"/><rect x="2" y="1" width="1" height="1" fill="#404040"/><rect x="8" y="1" width="1" height="1" fill="#404040"/><rect x="9" y="1" width="1" height="1" fill="#000"/><rect x="1" y="2" width="1" height="1" fill="#404040"/><rect x="6" y="2" width="2" height="1" fill="#fff"/><rect x="9" y="2" width="1" height="1" fill="#404040"/><rect x="0" y="3" width="1" height="1" fill="#000"/><rect x="7" y="3" width="2" height="1" fill="#fff"/><rect x="10" y="3" width="1" height="1" fill="#000"/><rect x="0" y="4" width="1" height="1" fill="#404040"/><rect x="8" y="4" width="1" height="1" fill="#fff"/><rect x="10" y="4" width="1" height="1" fill="#404040"/><rect x="0" y="5" width="1" height="1" fill="#000"/><rect x="3" y="5" width="6" height="1" fill="#0000ff"/><rect x="10" y="5" width="1" height="1" fill="#000"/><rect x="0" y="6" width="1" height="1" fill="#404040"/><rect x="3" y="6" width="6" height="1" fill="#0000ff"/><rect x="10" y="6" width="1" height="1" fill="#404040"/><rect x="0" y="7" width="1" height="1" fill="#000"/><rect x="7" y="7" width="2" height="1" fill="#fff"/><rect x="10" y="7" width="1" height="1" fill="#000"/><rect x="1" y="8" width="1" height="1" fill="#404040"/><rect x="4" y="8" width="4" height="1" fill="#fff"/><rect x="9" y="8" width="1" height="1" fill="#404040"/><rect x="10" y="8" width="2" height="1" fill="#000"/><rect x="1" y="9" width="1" height="1" fill="#000"/><rect x="2" y="9" width="1" height="1" fill="#404040"/><rect x="4" y="9" width="2" height="1" fill="#fff"/><rect x="8" y="9" width="1" height="1" fill="#404040"/><rect x="9" y="9" width="1" height="1" fill="#000"/><rect x="10" y="9" width="2" height="1" fill="#ffff00"/><rect x="12" y="9" width="1" height="1" fill="#000"/><rect x="3" y="10" width="1" height="1" fill="#000"/><rect x="4" y="10" width="1" height="1" fill="#404040"/><rect x="5" y="10" width="1" height="1" fill="#000"/><rect x="6" y="10" width="1" height="1" fill="#404040"/><rect x="7" y="10" width="1" height="1" fill="#000"/><rect x="9" y="10" width="1" height="1" fill="#000"/><rect x="10" y="10" width="1" height="1" fill="#ffff00"/><rect x="11" y="10" width="1" height="1" fill="#fff"/><rect x="12" y="10" width="1" height="1" fill="#ffff00"/><rect x="13" y="10" width="1" height="1" fill="#000"/><rect x="10" y="11" width="1" height="1" fill="#000"/><rect x="11" y="11" width="1" height="1" fill="#ffff00"/><rect x="12" y="11" width="1" height="1" fill="#fff"/><rect x="13" y="11" width="1" height="1" fill="#ffff00"/><rect x="14" y="11" width="1" height="1" fill="#000"/><rect x="11" y="12" width="1" height="1" fill="#000"/><rect x="12" y="12" width="2" height="1" fill="#ffff00"/><rect x="14" y="12" width="1" height="1" fill="#000"/><rect x="12" y="13" width="2" height="1" fill="#000"/></g></svg></div>
<div class="tb" style="left:210px"><svg viewBox="0 0 16 15" shape-rendering="crispEdges"><g transform="translate(-1,0)"><rect x="3" y="0" width="1" height="1" fill="#000"/><rect x="4" y="0" width="1" height="1" fill="#404040"/><rect x="5" y="0" width="1" height="1" fill="#000"/><rect x="6" y="0" width="1" height="1" fill="#404040"/><rect x="7" y="0" width="1" height="1" fill="#000"/><rect x="1" y="1" width="1" height="1" fill="#000"/><rect x="2" y="1" width="1" height="1" fill="#404040"/><rect x="3" y="1" width="5" height="1" fill="#fff"/><rect x="8" y="1" width="1" height="1" fill="#404040"/><rect x="9" y="1" width="1" height="1" fill="#000"/><rect x="1" y="2" width="1" height="1" fill="#404040"/><rect x="2" y="2" width="7" height="1" fill="#fff"/><rect x="9" y="2" width="1" height="1" fill="#404040"/><rect x="0" y="3" width="1" height="1" fill="#000"/><rect x="1" y="3" width="2" height="1" fill="#fff"/><rect x="3" y="3" width="6" height="1" fill="#0000ff"/><rect x="9" y="3" width="1" height="1" fill="#fff"/><rect x="10" y="3" width="5" height="1" fill="#000"/><rect x="0" y="4" width="1" height="1" fill="#404040"/><rect x="1" y="4" width="2" height="1" fill="#fff"/><rect x="3" y="4" width="1" height="1" fill="#0000ff"/><rect x="4" y="4" width="4" height="1" fill="#fff"/><rect x="8" y="4" width="1" height="1" fill="#0000ff"/><rect x="9" y="4" width="1" height="1" fill="#fff"/><rect x="10" y="4" width="1" height="1" fill="#404040"/><rect x="11" y="4" width="3" height="1" fill="#fff"/><rect x="14" y="4" width="1" height="1" fill="#000"/><rect x="0" y="5" width="1" height="1" fill="#000"/><rect x="1" y="5" width="2" height="1" fill="#fff"/><rect x="3" y="5" width="1" height="1" fill="#0000ff"/><rect x="4" y="5" width="4" height="1" fill="#fff"/><rect x="8" y="5" width="1" height="1" fill="#0000ff"/><rect x="9" y="5" width="1" height="1" fill="#fff"/><rect x="10" y="5" width="1" height="1" fill="#000"/><rect x="11" y="5" width="3" height="1" fill="#fff"/><rect x="14" y="5" width="1" height="1" fill="#000"/><rect x="0" y="6" width="1" height="1" fill="#404040"/><rect x="1" y="6" width="2" height="1" fill="#fff"/><rect x="3" y="6" width="1" height="1" fill="#0000ff"/><rect x="4" y="6" width="4" height="1" fill="#fff"/><rect x="8" y="6" width="1" height="1" fill="#0000ff"/><rect x="9" y="6" width="1" height="1" fill="#fff"/><rect x="10" y="6" width="1" height="1" fill="#404040"/><rect x="11" y="6" width="3" height="1" fill="#fff"/><rect x="14" y="6" width="1" height="1" fill="#000"/><rect x="0" y="7" width="1" height="1" fill="#000"/><rect x="1" y="7" width="2" height="1" fill="#fff"/><rect x="3" y="7" width="6" height="1" fill="#0000ff"/><rect x="9" y="7" width="1" height="1" fill="#fff"/><rect x="10" y="7" width="1" height="1" fill="#000"/><rect x="11" y="7" width="3" height="1" fill="#fff"/><rect x="14" y="7" width="1" height="1" fill="#000"/><rect x="1" y="8" width="1" height="1" fill="#404040"/><rect x="2" y="8" width="7" height="1" fill="#fff"/><rect x="9" y="8" width="1" height="1" fill="#404040"/><rect x="10" y="8" width="2" height="1" fill="#000"/><rect x="12" y="8" width="2" height="1" fill="#fff"/><rect x="14" y="8" width="1" height="1" fill="#000"/><rect x="1" y="9" width="1" height="1" fill="#000"/><rect x="2" y="9" width="1" height="1" fill="#404040"/><rect x="3" y="9" width="5" height="1" fill="#fff"/><rect x="8" y="9" width="1" height="1" fill="#404040"/><rect x="9" y="9" width="1" height="1" fill="#000"/><rect x="10" y="9" width="2" height="1" fill="#ffff00"/><rect x="12" y="9" width="1" height="1" fill="#000"/><rect x="13" y="9" width="1" height="1" fill="#fff"/><rect x="14" y="9" width="1" height="1" fill="#000"/><rect x="2" y="10" width="2" height="1" fill="#000"/><rect x="4" y="10" width="1" height="1" fill="#404040"/><rect x="5" y="10" width="1" height="1" fill="#000"/><rect x="6" y="10" width="1" height="1" fill="#404040"/><rect x="7" y="10" width="1" height="1" fill="#000"/><rect x="8" y="10" width="1" height="1" fill="#fff"/><rect x="9" y="10" width="1" height="1" fill="#000"/><rect x="10" y="10" width="1" height="1" fill="#ffff00"/><rect x="11" y="10" width="1" height="1" fill="#fff"/><rect x="12" y="10" width="1" height="1" fill="#ffff00"/><rect x="13" y="10" width="2" height="1" fill="#000"/><rect x="2" y="11" width="1" height="1" fill="#000"/><rect x="3" y="11" width="7" height="1" fill="#fff"/><rect x="10" y="11" width="1" height="1" fill="#000"/><rect x="11" y="11" width="1" height="1" fill="#ffff00"/><rect x="12" y="11" width="1" height="1" fill="#fff"/><rect x="13" y="11" width="1" height="1" fill="#ffff00"/><rect x="14" y="11" width="1" height="1" fill="#000"/><rect x="2" y="12" width="10" height="1" fill="#000"/><rect x="12" y="12" width="2" height="1" fill="#ffff00"/><rect x="14" y="12" width="1" height="1" fill="#000"/><rect x="12" y="13" width="2" height="1" fill="#000"/></g></svg></div>
<div class="tb" style="left:233px"><svg viewBox="0 0 16 15" shape-rendering="crispEdges"><g transform="translate(-1,0)"><rect x="3" y="0" width="1" height="1" fill="#000"/><rect x="4" y="0" width="1" height="1" fill="#404040"/><rect x="5" y="0" width="1" height="1" fill="#000"/><rect x="6" y="0" width="1" height="1" fill="#404040"/><rect x="7" y="0" width="1" height="1" fill="#000"/><rect x="1" y="1" width="1" height="1" fill="#000"/><rect x="2" y="1" width="1" height="1" fill="#404040"/><rect x="8" y="1" width="1" height="1" fill="#404040"/><rect x="9" y="1" width="1" height="1" fill="#000"/><rect x="1" y="2" width="1" height="1" fill="#404040"/><rect x="6" y="2" width="2" height="1" fill="#fff"/><rect x="9" y="2" width="1" height="1" fill="#404040"/><rect x="0" y="3" width="1" height="1" fill="#000"/><rect x="3" y="3" width="6" height="1" fill="#fff"/><rect x="10" y="3" width="1" height="1" fill="#000"/><rect x="0" y="4" width="1" height="1" fill="#404040"/><rect x="3" y="4" width="6" height="1" fill="#fff"/><rect x="10" y="4" width="1" height="1" fill="#404040"/><rect x="0" y="5" width="1" height="1" fill="#000"/><rect x="3" y="5" width="6" height="1" fill="#fff"/><rect x="10" y="5" width="1" height="1" fill="#000"/><rect x="0" y="6" width="1" height="1" fill="#404040"/><rect x="3" y="6" width="6" height="1" fill="#fff"/><rect x="10" y="6" width="1" height="1" fill="#404040"/><rect x="0" y="7" width="1" height="1" fill="#000"/><rect x="3" y="7" width="6" height="1" fill="#fff"/><rect x="10" y="7" width="1" height="1" fill="#000"/><rect x="1" y="8" width="1" height="1" fill="#404040"/><rect x="3" y="8" width="6" height="1" fill="#fff"/><rect x="9" y="8" width="1" height="1" fill="#404040"/><rect x="10" y="8" width="2" height="1" fill="#000"/><rect x="1" y="9" width="1" height="1" fill="#000"/><rect x="2" y="9" width="1" height="1" fill="#404040"/><rect x="4" y="9" width="2" height="1" fill="#fff"/><rect x="8" y="9" width="1" height="1" fill="#404040"/><rect x="9" y="9" width="1" height="1" fill="#000"/><rect x="10" y="9" width="2" height="1" fill="#ffff00"/><rect x="12" y="9" width="1" height="1" fill="#000"/><rect x="3" y="10" width="1" height="1" fill="#000"/><rect x="4" y="10" width="1" height="1" fill="#404040"/><rect x="5" y="10" width="1" height="1" fill="#000"/><rect x="6" y="10" width="1" height="1" fill="#404040"/><rect x="7" y="10" width="1" height="1" fill="#000"/><rect x="9" y="10" width="1" height="1" fill="#000"/><rect x="10" y="10" width="1" height="1" fill="#ffff00"/><rect x="11" y="10" width="1" height="1" fill="#fff"/><rect x="12" y="10" width="1" height="1" fill="#ffff00"/><rect x="13" y="10" width="1" height="1" fill="#000"/><rect x="10" y="11" width="1" height="1" fill="#000"/><rect x="11" y="11" width="1" height="1" fill="#ffff00"/><rect x="12" y="11" width="1" height="1" fill="#fff"/><rect x="13" y="11" width="1" height="1" fill="#ffff00"/><rect x="14" y="11" width="1" height="1" fill="#000"/><rect x="11" y="12" width="1" height="1" fill="#000"/><rect x="12" y="12" width="2" height="1" fill="#ffff00"/><rect x="14" y="12" width="1" height="1" fill="#000"/><rect x="12" y="13" width="2" height="1" fill="#000"/></g></svg></div>
<div class="tb" style="left:264px"><svg viewBox="0 0 16 15" shape-rendering="crispEdges"><rect x="0" y="1" width="14" height="1" fill="#000"/><rect x="0" y="2" width="1" height="1" fill="#000"/><rect x="1" y="2" width="3" height="1" fill="#fff"/><rect x="4" y="2" width="1" height="1" fill="#000"/><rect x="5" y="2" width="2" height="1" fill="#fff"/><rect x="7" y="2" width="1" height="1" fill="#000"/><rect x="8" y="2" width="1" height="1" fill="#fff"/><rect x="9" y="2" width="1" height="1" fill="#000"/><rect x="10" y="2" width="1" height="1" fill="#fff"/><rect x="11" y="2" width="3" height="1" fill="#000"/><rect x="0" y="3" width="1" height="1" fill="#000"/><rect x="1" y="3" width="3" height="1" fill="#fff"/><rect x="4" y="3" width="1" height="1" fill="#000"/><rect x="5" y="3" width="2" height="1" fill="#fff"/><rect x="7" y="3" width="1" height="1" fill="#000"/><rect x="8" y="3" width="1" height="1" fill="#fff"/><rect x="9" y="3" width="1" height="1" fill="#000"/><rect x="10" y="3" width="1" height="1" fill="#fff"/><rect x="11" y="3" width="3" height="1" fill="#000"/><rect x="0" y="4" width="1" height="1" fill="#000"/><rect x="1" y="4" width="3" height="1" fill="#fff"/><rect x="4" y="4" width="1" height="1" fill="#000"/><rect x="5" y="4" width="2" height="1" fill="#fff"/><rect x="7" y="4" width="1" height="1" fill="#000"/><rect x="8" y="4" width="1" height="1" fill="#fff"/><rect x="9" y="4" width="1" height="1" fill="#000"/><rect x="10" y="4" width="1" height="1" fill="#fff"/><rect x="11" y="4" width="3" height="1" fill="#000"/><rect x="0" y="5" width="1" height="1" fill="#000"/><rect x="1" y="5" width="3" height="1" fill="#fff"/><rect x="4" y="5" width="1" height="1" fill="#000"/><rect x="5" y="5" width="2" height="1" fill="#fff"/><rect x="7" y="5" width="1" height="1" fill="#000"/><rect x="8" y="5" width="1" height="1" fill="#fff"/><rect x="9" y="5" width="1" height="1" fill="#000"/><rect x="10" y="5" width="1" height="1" fill="#fff"/><rect x="11" y="5" width="3" height="1" fill="#000"/><rect x="0" y="6" width="1" height="1" fill="#000"/><rect x="1" y="6" width="3" height="1" fill="#fff"/><rect x="4" y="6" width="1" height="1" fill="#000"/><rect x="5" y="6" width="2" height="1" fill="#fff"/><rect x="7" y="6" width="1" height="1" fill="#000"/><rect x="8" y="6" width="1" height="1" fill="#fff"/><rect x="9" y="6" width="1" height="1" fill="#000"/><rect x="10" y="6" width="1" height="1" fill="#fff"/><rect x="11" y="6" width="3" height="1" fill="#000"/><rect x="0" y="7" width="1" height="1" fill="#000"/><rect x="1" y="7" width="3" height="1" fill="#fff"/><rect x="4" y="7" width="1" height="1" fill="#000"/><rect x="5" y="7" width="2" height="1" fill="#fff"/><rect x="7" y="7" width="1" height="1" fill="#000"/><rect x="8" y="7" width="1" height="1" fill="#fff"/><rect x="9" y="7" width="1" height="1" fill="#000"/><rect x="10" y="7" width="1" height="1" fill="#fff"/><rect x="11" y="7" width="3" height="1" fill="#000"/><rect x="0" y="8" width="1" height="1" fill="#000"/><rect x="1" y="8" width="3" height="1" fill="#fff"/><rect x="4" y="8" width="1" height="1" fill="#000"/><rect x="5" y="8" width="2" height="1" fill="#fff"/><rect x="7" y="8" width="1" height="1" fill="#000"/><rect x="8" y="8" width="1" height="1" fill="#fff"/><rect x="9" y="8" width="1" height="1" fill="#000"/><rect x="10" y="8" width="1" height="1" fill="#fff"/><rect x="11" y="8" width="3" height="1" fill="#000"/><rect x="0" y="9" width="1" height="1" fill="#000"/><rect x="1" y="9" width="3" height="1" fill="#fff"/><rect x="4" y="9" width="1" height="1" fill="#000"/><rect x="5" y="9" width="2" height="1" fill="#fff"/><rect x="7" y="9" width="1" height="1" fill="#000"/><rect x="8" y="9" width="1" height="1" fill="#fff"/><rect x="9" y="9" width="1" height="1" fill="#000"/><rect x="10" y="9" width="1" height="1" fill="#fff"/><rect x="11" y="9" width="3" height="1" fill="#000"/><rect x="0" y="10" width="1" height="1" fill="#000"/><rect x="1" y="10" width="3" height="1" fill="#fff"/><rect x="4" y="10" width="1" height="1" fill="#000"/><rect x="5" y="10" width="2" height="1" fill="#fff"/><rect x="7" y="10" width="1" height="1" fill="#000"/><rect x="8" y="10" width="1" height="1" fill="#fff"/><rect x="9" y="10" width="1" height="1" fill="#000"/><rect x="10" y="10" width="1" height="1" fill="#fff"/><rect x="11" y="10" width="3" height="1" fill="#000"/><rect x="0" y="11" width="1" height="1" fill="#000"/><rect x="1" y="11" width="3" height="1" fill="#fff"/><rect x="4" y="11" width="1" height="1" fill="#000"/><rect x="5" y="11" width="2" height="1" fill="#fff"/><rect x="7" y="11" width="1" height="1" fill="#000"/><rect x="8" y="11" width="1" height="1" fill="#fff"/><rect x="9" y="11" width="1" height="1" fill="#000"/><rect x="10" y="11" width="1" height="1" fill="#fff"/><rect x="11" y="11" width="3" height="1" fill="#000"/><rect x="0" y="12" width="1" height="1" fill="#000"/><rect x="1" y="12" width="3" height="1" fill="#fff"/><rect x="4" y="12" width="1" height="1" fill="#000"/><rect x="5" y="12" width="2" height="1" fill="#fff"/><rect x="7" y="12" width="1" height="1" fill="#000"/><rect x="8" y="12" width="1" height="1" fill="#fff"/><rect x="9" y="12" width="1" height="1" fill="#000"/><rect x="10" y="12" width="1" height="1" fill="#fff"/><rect x="11" y="12" width="3" height="1" fill="#000"/><rect x="0" y="13" width="14" height="1" fill="#000"/></svg></div>
<div class="tb" style="left:287px"><svg viewBox="0 0 16 15" shape-rendering="crispEdges"><g transform="translate(-1,0)"><rect x="0" y="0" width="6" height="1" fill="#000"/><rect x="0" y="1" width="6" height="1" fill="#000"/><rect x="0" y="2" width="2" height="1" fill="#000"/><rect x="0" y="3" width="2" height="1" fill="#000"/><rect x="3" y="3" width="1" height="1" fill="#ff0000"/><rect x="5" y="3" width="6" height="1" fill="#000"/><rect x="0" y="4" width="3" height="1" fill="#000"/><rect x="3" y="4" width="1" height="1" fill="#ff0000"/><rect x="5" y="4" width="6" height="1" fill="#000"/><rect x="0" y="5" width="3" height="1" fill="#000"/><rect x="3" y="5" width="1" height="1" fill="#ff0000"/><rect x="5" y="5" width="2" height="1" fill="#000"/><rect x="0" y="6" width="2" height="1" fill="#000"/><rect x="3" y="6" width="1" height="1" fill="#ff0000"/><rect x="5" y="6" width="2" height="1" fill="#000"/><rect x="10" y="6" width="6" height="1" fill="#000"/><rect x="0" y="7" width="2" height="1" fill="#000"/><rect x="3" y="7" width="1" height="1" fill="#ff0000"/><rect x="5" y="7" width="4" height="1" fill="#000"/><rect x="10" y="7" width="6" height="1" fill="#000"/><rect x="0" y="8" width="2" height="1" fill="#000"/><rect x="3" y="8" width="1" height="1" fill="#ff0000"/><rect x="5" y="8" width="4" height="1" fill="#000"/><rect x="12" y="8" width="2" height="1" fill="#000"/><rect x="0" y="9" width="2" height="1" fill="#000"/><rect x="3" y="9" width="1" height="1" fill="#ff0000"/><rect x="5" y="9" width="2" height="1" fill="#000"/><rect x="12" y="9" width="2" height="1" fill="#000"/><rect x="3" y="10" width="1" height="1" fill="#ff0000"/><rect x="5" y="10" width="2" height="1" fill="#000"/><rect x="8" y="10" width="1" height="1" fill="#ff0000"/><rect x="12" y="10" width="2" height="1" fill="#000"/><rect x="3" y="11" width="1" height="1" fill="#ff0000"/><rect x="5" y="11" width="2" height="1" fill="#000"/><rect x="8" y="11" width="1" height="1" fill="#ff0000"/><rect x="12" y="11" width="2" height="1" fill="#000"/><rect x="3" y="12" width="1" height="1" fill="#ff0000"/><rect x="5" y="12" width="2" height="1" fill="#000"/><rect x="8" y="12" width="1" height="1" fill="#ff0000"/><rect x="12" y="12" width="2" height="1" fill="#000"/><rect x="15" y="12" width="1" height="1" fill="#ff0000"/><rect x="3" y="13" width="1" height="1" fill="#ff0000"/><rect x="8" y="13" width="1" height="1" fill="#ff0000"/><rect x="12" y="13" width="2" height="1" fill="#000"/><rect x="15" y="13" width="1" height="1" fill="#ff0000"/><rect x="0" y="14" width="12" height="1" fill="#ff0000"/><rect x="12" y="14" width="2" height="1" fill="#000"/><rect x="14" y="14" width="2" height="1" fill="#ff0000"/></g></svg></div>
<div class="tb" style="left:310px"><svg viewBox="0 0 16 15" shape-rendering="crispEdges"><rect x="2" y="2" width="1" height="1" fill="#000"/><rect x="13" y="2" width="1" height="1" fill="#000"/><rect x="1" y="3" width="3" height="1" fill="#000"/><rect x="12" y="3" width="3" height="1" fill="#000"/><rect x="1" y="4" width="1" height="1" fill="#fff"/><rect x="2" y="4" width="1" height="1" fill="#000"/><rect x="3" y="4" width="1" height="1" fill="#fff"/><rect x="12" y="4" width="1" height="1" fill="#fff"/><rect x="13" y="4" width="1" height="1" fill="#000"/><rect x="14" y="4" width="1" height="1" fill="#fff"/><rect x="0" y="5" width="1" height="1" fill="#000"/><rect x="1" y="5" width="1" height="1" fill="#fff"/><rect x="2" y="5" width="1" height="1" fill="#000"/><rect x="3" y="5" width="1" height="1" fill="#fff"/><rect x="4" y="5" width="1" height="1" fill="#000"/><rect x="11" y="5" width="1" height="1" fill="#000"/><rect x="12" y="5" width="1" height="1" fill="#fff"/><rect x="13" y="5" width="1" height="1" fill="#000"/><rect x="14" y="5" width="1" height="1" fill="#fff"/><rect x="15" y="5" width="1" height="1" fill="#000"/><rect x="0" y="6" width="6" height="1" fill="#000"/><rect x="10" y="6" width="6" height="1" fill="#000"/><rect x="0" y="7" width="1" height="1" fill="#000"/><rect x="1" y="7" width="1" height="1" fill="#fff"/><rect x="2" y="7" width="1" height="1" fill="#000"/><rect x="3" y="7" width="1" height="1" fill="#fff"/><rect x="4" y="7" width="3" height="1" fill="#000"/><rect x="9" y="7" width="3" height="1" fill="#000"/><rect x="12" y="7" width="1" height="1" fill="#fff"/><rect x="13" y="7" width="1" height="1" fill="#000"/><rect x="14" y="7" width="1" height="1" fill="#fff"/><rect x="15" y="7" width="1" height="1" fill="#000"/><rect x="1" y="8" width="1" height="1" fill="#fff"/><rect x="2" y="8" width="1" height="1" fill="#000"/><rect x="3" y="8" width="1" height="1" fill="#fff"/><rect x="6" y="8" width="4" height="1" fill="#000"/><rect x="12" y="8" width="1" height="1" fill="#fff"/><rect x="13" y="8" width="1" height="1" fill="#000"/><rect x="14" y="8" width="1" height="1" fill="#fff"/><rect x="1" y="9" width="3" height="1" fill="#000"/><rect x="7" y="9" width="2" height="1" fill="#000"/><rect x="12" y="9" width="3" height="1" fill="#000"/><rect x="2" y="10" width="1" height="1" fill="#000"/><rect x="6" y="10" width="4" height="1" fill="#000"/><rect x="13" y="10" width="1" height="1" fill="#000"/><rect x="5" y="11" width="2" height="1" fill="#000"/><rect x="9" y="11" width="2" height="1" fill="#000"/><rect x="4" y="12" width="2" height="1" fill="#000"/><rect x="10" y="12" width="2" height="1" fill="#000"/><rect x="3" y="13" width="2" height="1" fill="#000"/><rect x="11" y="13" width="2" height="1" fill="#000"/><rect x="2" y="14" width="2" height="1" fill="#000"/><rect x="12" y="14" width="2" height="1" fill="#000"/></svg></div>
<div class="tb" style="left:333px"><svg viewBox="0 0 16 15" shape-rendering="crispEdges"><rect x="0" y="1" width="15" height="1" fill="#000"/><rect x="0" y="2" width="15" height="1" fill="#000"/><rect x="0" y="3" width="1" height="1" fill="#000"/><rect x="1" y="3" width="13" height="1" fill="#fff"/><rect x="14" y="3" width="1" height="1" fill="#000"/><rect x="0" y="4" width="15" height="1" fill="#000"/><rect x="0" y="5" width="1" height="1" fill="#000"/><rect x="1" y="5" width="13" height="1" fill="#fff"/><rect x="14" y="5" width="1" height="1" fill="#000"/><rect x="0" y="6" width="15" height="1" fill="#000"/><rect x="0" y="7" width="1" height="1" fill="#000"/><rect x="1" y="7" width="13" height="1" fill="#fff"/><rect x="14" y="7" width="1" height="1" fill="#000"/><rect x="0" y="8" width="1" height="1" fill="#000"/><rect x="1" y="8" width="13" height="1" fill="#fff"/><rect x="14" y="8" width="1" height="1" fill="#000"/><rect x="0" y="9" width="15" height="1" fill="#000"/><rect x="0" y="10" width="1" height="1" fill="#000"/><rect x="1" y="10" width="13" height="1" fill="#fff"/><rect x="14" y="10" width="1" height="1" fill="#000"/><rect x="0" y="11" width="1" height="1" fill="#000"/><rect x="1" y="11" width="13" height="1" fill="#fff"/><rect x="14" y="11" width="1" height="1" fill="#000"/><rect x="0" y="12" width="1" height="1" fill="#000"/><rect x="1" y="12" width="13" height="1" fill="#fff"/><rect x="14" y="12" width="1" height="1" fill="#000"/><rect x="0" y="13" width="15" height="1" fill="#000"/></svg></div>
<div class="tb" style="left:364px"><svg viewBox="0 0 16 15" shape-rendering="crispEdges"><rect x="0" y="1" width="1" height="1" fill="#000"/><rect x="0" y="2" width="1" height="1" fill="#000"/><rect x="5" y="2" width="1" height="1" fill="#ff0000"/><rect x="11" y="2" width="1" height="1" fill="#ff0000"/><rect x="0" y="3" width="1" height="1" fill="#000"/><rect x="4" y="3" width="3" height="1" fill="#ff0000"/><rect x="10" y="3" width="3" height="1" fill="#ff0000"/><rect x="0" y="4" width="1" height="1" fill="#000"/><rect x="3" y="4" width="2" height="1" fill="#ff0000"/><rect x="6" y="4" width="2" height="1" fill="#ff0000"/><rect x="9" y="4" width="2" height="1" fill="#ff0000"/><rect x="12" y="4" width="2" height="1" fill="#ff0000"/><rect x="0" y="5" width="1" height="1" fill="#000"/><rect x="2" y="5" width="2" height="1" fill="#ff0000"/><rect x="7" y="5" width="3" height="1" fill="#ff0000"/><rect x="13" y="5" width="2" height="1" fill="#ff0000"/><rect x="0" y="6" width="1" height="1" fill="#000"/><rect x="1" y="6" width="2" height="1" fill="#ff0000"/><rect x="8" y="6" width="1" height="1" fill="#ff0000"/><rect x="14" y="6" width="1" height="1" fill="#ff0000"/><rect x="0" y="7" width="2" height="1" fill="#ff0000"/><rect x="0" y="8" width="1" height="1" fill="#000"/><rect x="0" y="9" width="1" height="1" fill="#000"/><rect x="0" y="10" width="15" height="1" fill="#000"/><rect x="0" y="11" width="1" height="1" fill="#000"/><rect x="14" y="11" width="1" height="1" fill="#000"/><rect x="0" y="12" width="2" height="1" fill="#000"/><rect x="14" y="12" width="1" height="1" fill="#000"/><rect x="0" y="13" width="1" height="1" fill="#000"/><rect x="2" y="13" width="1" height="1" fill="#000"/><rect x="14" y="13" width="1" height="1" fill="#000"/><rect x="1" y="14" width="1" height="1" fill="#000"/></svg></div>
<div class="tb" style="left:387px"><svg viewBox="0 0 16 15" shape-rendering="crispEdges"><rect x="12" y="0" width="4" height="1" fill="#ff0000"/><rect x="10" y="1" width="3" height="1" fill="#ff0000"/><rect x="0" y="2" width="10" height="1" fill="#000"/><rect x="10" y="2" width="1" height="1" fill="#ff0000"/><rect x="11" y="2" width="5" height="1" fill="#000"/><rect x="9" y="3" width="2" height="1" fill="#ff0000"/><rect x="2" y="4" width="4" height="1" fill="#000"/><rect x="8" y="4" width="2" height="1" fill="#ff0000"/><rect x="3" y="5" width="3" height="1" fill="#000"/><rect x="8" y="5" width="1" height="1" fill="#ff0000"/><rect x="2" y="6" width="4" height="1" fill="#000"/><rect x="7" y="6" width="2" height="1" fill="#ff0000"/><rect x="1" y="7" width="3" height="1" fill="#000"/><rect x="5" y="7" width="1" height="1" fill="#000"/><rect x="7" y="7" width="1" height="1" fill="#ff0000"/><rect x="0" y="8" width="3" height="1" fill="#000"/><rect x="6" y="8" width="2" height="1" fill="#ff0000"/><rect x="10" y="8" width="2" height="1" fill="#000"/><rect x="13" y="8" width="2" height="1" fill="#000"/><rect x="0" y="9" width="2" height="1" fill="#000"/><rect x="5" y="9" width="2" height="1" fill="#ff0000"/><rect x="9" y="9" width="1" height="1" fill="#000"/><rect x="12" y="9" width="1" height="1" fill="#000"/><rect x="15" y="9" width="1" height="1" fill="#000"/><rect x="5" y="10" width="2" height="1" fill="#ff0000"/><rect x="8" y="10" width="3" height="1" fill="#000"/><rect x="12" y="10" width="1" height="1" fill="#000"/><rect x="15" y="10" width="1" height="1" fill="#000"/><rect x="4" y="11" width="2" height="1" fill="#ff0000"/><rect x="9" y="11" width="1" height="1" fill="#000"/><rect x="12" y="11" width="1" height="1" fill="#000"/><rect x="15" y="11" width="1" height="1" fill="#000"/><rect x="4" y="12" width="2" height="1" fill="#ff0000"/><rect x="9" y="12" width="1" height="1" fill="#000"/><rect x="12" y="12" width="1" height="1" fill="#000"/><rect x="15" y="12" width="1" height="1" fill="#000"/><rect x="2" y="13" width="3" height="1" fill="#ff0000"/><rect x="9" y="13" width="1" height="1" fill="#000"/><rect x="12" y="13" width="1" height="1" fill="#000"/><rect x="15" y="13" width="1" height="1" fill="#000"/><rect x="0" y="14" width="3" height="1" fill="#ff0000"/><rect x="8" y="14" width="1" height="1" fill="#000"/><rect x="13" y="14" width="2" height="1" fill="#000"/></svg></div>
<div class="tb" style="left:410px"><svg viewBox="0 0 16 15" shape-rendering="crispEdges"><rect x="2" y="1" width="4" height="1" fill="#ff0000"/><rect x="8" y="1" width="6" height="1" fill="#008000"/><rect x="1" y="2" width="6" height="1" fill="#ff0000"/><rect x="9" y="2" width="2" height="1" fill="#008000"/><rect x="13" y="2" width="2" height="1" fill="#008000"/><rect x="1" y="3" width="2" height="1" fill="#ff0000"/><rect x="5" y="3" width="2" height="1" fill="#ff0000"/><rect x="9" y="3" width="2" height="1" fill="#008000"/><rect x="13" y="3" width="2" height="1" fill="#008000"/><rect x="1" y="4" width="2" height="1" fill="#ff0000"/><rect x="5" y="4" width="2" height="1" fill="#ff0000"/><rect x="9" y="4" width="5" height="1" fill="#008000"/><rect x="1" y="5" width="6" height="1" fill="#ff0000"/><rect x="9" y="5" width="2" height="1" fill="#008000"/><rect x="13" y="5" width="2" height="1" fill="#008000"/><rect x="1" y="6" width="6" height="1" fill="#ff0000"/><rect x="9" y="6" width="2" height="1" fill="#008000"/><rect x="13" y="6" width="2" height="1" fill="#008000"/><rect x="1" y="7" width="2" height="1" fill="#ff0000"/><rect x="5" y="7" width="1" height="1" fill="#ff0000"/><rect x="6" y="7" width="4" height="1" fill="#0000ff"/><rect x="10" y="7" width="1" height="1" fill="#008000"/><rect x="13" y="7" width="2" height="1" fill="#008000"/><rect x="0" y="8" width="3" height="1" fill="#ff0000"/><rect x="4" y="8" width="7" height="1" fill="#0000ff"/><rect x="11" y="8" width="3" height="1" fill="#008000"/><rect x="0" y="9" width="3" height="1" fill="#ff0000"/><rect x="3" y="9" width="4" height="1" fill="#0000ff"/><rect x="9" y="9" width="3" height="1" fill="#0000ff"/><rect x="3" y="10" width="3" height="1" fill="#0000ff"/><rect x="3" y="11" width="3" height="1" fill="#0000ff"/><rect x="3" y="12" width="4" height="1" fill="#0000ff"/><rect x="9" y="12" width="3" height="1" fill="#0000ff"/><rect x="4" y="13" width="7" height="1" fill="#0000ff"/><rect x="6" y="14" width="4" height="1" fill="#0000ff"/></svg></div>
<div class="tb" style="left:433px"><svg viewBox="0 0 16 15" shape-rendering="crispEdges"><rect x="10" y="0" width="2" height="1" fill="#000"/><rect x="14" y="0" width="1" height="1" fill="#ff0000"/><rect x="10" y="1" width="2" height="1" fill="#000"/><rect x="13" y="1" width="2" height="1" fill="#ff0000"/><rect x="13" y="2" width="1" height="1" fill="#ff0000"/><rect x="10" y="3" width="2" height="1" fill="#000"/><rect x="12" y="3" width="2" height="1" fill="#ff0000"/><rect x="10" y="4" width="2" height="1" fill="#000"/><rect x="12" y="4" width="1" height="1" fill="#ff0000"/><rect x="11" y="5" width="1" height="1" fill="#ff0000"/><rect x="0" y="6" width="2" height="1" fill="#000"/><rect x="3" y="6" width="2" height="1" fill="#000"/><rect x="6" y="6" width="2" height="1" fill="#000"/><rect x="9" y="6" width="6" height="1" fill="#000"/><rect x="0" y="7" width="2" height="1" fill="#000"/><rect x="3" y="7" width="2" height="1" fill="#000"/><rect x="6" y="7" width="2" height="1" fill="#000"/><rect x="9" y="7" width="6" height="1" fill="#000"/><rect x="0" y="8" width="1" height="1" fill="#ff0000"/><rect x="9" y="8" width="1" height="1" fill="#ff0000"/><rect x="10" y="8" width="2" height="1" fill="#000"/><rect x="0" y="9" width="2" height="1" fill="#ff0000"/><rect x="8" y="9" width="2" height="1" fill="#ff0000"/><rect x="1" y="10" width="2" height="1" fill="#ff0000"/><rect x="7" y="10" width="2" height="1" fill="#ff0000"/><rect x="10" y="10" width="2" height="1" fill="#000"/><rect x="2" y="11" width="2" height="1" fill="#ff0000"/><rect x="6" y="11" width="2" height="1" fill="#ff0000"/><rect x="10" y="11" width="2" height="1" fill="#000"/><rect x="3" y="12" width="4" height="1" fill="#ff0000"/><rect x="10" y="13" width="2" height="1" fill="#000"/><rect x="10" y="14" width="2" height="1" fill="#000"/></svg></div>
<div class="tb" style="left:464px"><svg viewBox="0 0 16 15" shape-rendering="crispEdges"><rect x="7" y="2" width="1" height="1" fill="#808080"/><rect x="8" y="3" width="1" height="1" fill="#fff"/><rect x="7" y="4" width="1" height="1" fill="#808080"/><rect x="0" y="5" width="2" height="1" fill="#808080"/><rect x="3" y="5" width="2" height="1" fill="#808080"/><rect x="6" y="5" width="3" height="1" fill="#808080"/><rect x="10" y="5" width="2" height="1" fill="#808080"/><rect x="13" y="5" width="2" height="1" fill="#808080"/><rect x="1" y="6" width="2" height="1" fill="#fff"/><rect x="4" y="6" width="2" height="1" fill="#fff"/><rect x="6" y="6" width="3" height="1" fill="#808080"/><rect x="9" y="6" width="1" height="1" fill="#fff"/><rect x="11" y="6" width="2" height="1" fill="#fff"/><rect x="14" y="6" width="2" height="1" fill="#fff"/><rect x="5" y="7" width="1" height="1" fill="#808080"/><rect x="7" y="7" width="1" height="1" fill="#808080"/><rect x="8" y="7" width="1" height="1" fill="#fff"/><rect x="9" y="7" width="1" height="1" fill="#808080"/><rect x="5" y="8" width="1" height="1" fill="#808080"/><rect x="6" y="8" width="1" height="1" fill="#fff"/><rect x="8" y="8" width="1" height="1" fill="#fff"/><rect x="9" y="8" width="1" height="1" fill="#808080"/><rect x="10" y="8" width="1" height="1" fill="#fff"/><rect x="4" y="9" width="1" height="1" fill="#808080"/><rect x="6" y="9" width="1" height="1" fill="#fff"/><rect x="7" y="9" width="1" height="1" fill="#808080"/><rect x="10" y="9" width="1" height="1" fill="#808080"/><rect x="4" y="10" width="1" height="1" fill="#808080"/><rect x="5" y="10" width="1" height="1" fill="#fff"/><rect x="8" y="10" width="1" height="1" fill="#fff"/><rect x="10" y="10" width="1" height="1" fill="#808080"/><rect x="11" y="10" width="1" height="1" fill="#fff"/><rect x="3" y="11" width="1" height="1" fill="#808080"/><rect x="5" y="11" width="1" height="1" fill="#fff"/><rect x="7" y="11" width="1" height="1" fill="#808080"/><rect x="11" y="11" width="1" height="1" fill="#808080"/><rect x="2" y="12" width="1" height="1" fill="#808080"/><rect x="4" y="12" width="1" height="1" fill="#fff"/><rect x="8" y="12" width="1" height="1" fill="#fff"/><rect x="12" y="12" width="1" height="1" fill="#808080"/><rect x="1" y="13" width="1" height="1" fill="#808080"/><rect x="3" y="13" width="1" height="1" fill="#fff"/><rect x="7" y="13" width="1" height="1" fill="#808080"/><rect x="13" y="13" width="2" height="1" fill="#808080"/><rect x="0" y="14" width="1" height="1" fill="#808080"/><rect x="2" y="14" width="1" height="1" fill="#fff"/><rect x="8" y="14" width="1" height="1" fill="#fff"/><rect x="14" y="14" width="2" height="1" fill="#fff"/><rect x="1" y="15" width="1" height="1" fill="#fff"/></svg></div>
<div class="tb" style="left:487px"><svg viewBox="0 0 16 15" shape-rendering="crispEdges"><rect x="0" y="0" width="1" height="1" fill="#808080"/><rect x="7" y="0" width="1" height="1" fill="#808080"/><rect x="14" y="0" width="1" height="1" fill="#808080"/><rect x="1" y="1" width="1" height="1" fill="#808080"/><rect x="8" y="1" width="1" height="1" fill="#fff"/><rect x="13" y="1" width="1" height="1" fill="#808080"/><rect x="15" y="1" width="1" height="1" fill="#fff"/><rect x="1" y="2" width="1" height="1" fill="#808080"/><rect x="2" y="2" width="1" height="1" fill="#fff"/><rect x="7" y="2" width="1" height="1" fill="#808080"/><rect x="13" y="2" width="1" height="1" fill="#808080"/><rect x="14" y="2" width="1" height="1" fill="#fff"/><rect x="2" y="3" width="1" height="1" fill="#808080"/><rect x="8" y="3" width="1" height="1" fill="#fff"/><rect x="12" y="3" width="1" height="1" fill="#808080"/><rect x="14" y="3" width="1" height="1" fill="#fff"/><rect x="2" y="4" width="1" height="1" fill="#808080"/><rect x="3" y="4" width="1" height="1" fill="#fff"/><rect x="7" y="4" width="1" height="1" fill="#808080"/><rect x="12" y="4" width="1" height="1" fill="#808080"/><rect x="13" y="4" width="1" height="1" fill="#fff"/><rect x="3" y="5" width="1" height="1" fill="#808080"/><rect x="8" y="5" width="1" height="1" fill="#fff"/><rect x="11" y="5" width="1" height="1" fill="#808080"/><rect x="13" y="5" width="1" height="1" fill="#fff"/><rect x="3" y="6" width="1" height="1" fill="#808080"/><rect x="4" y="6" width="1" height="1" fill="#fff"/><rect x="7" y="6" width="1" height="1" fill="#808080"/><rect x="11" y="6" width="1" height="1" fill="#808080"/><rect x="12" y="6" width="1" height="1" fill="#fff"/><rect x="4" y="7" width="1" height="1" fill="#808080"/><rect x="8" y="7" width="1" height="1" fill="#fff"/><rect x="10" y="7" width="1" height="1" fill="#808080"/><rect x="12" y="7" width="1" height="1" fill="#fff"/><rect x="4" y="8" width="1" height="1" fill="#808080"/><rect x="5" y="8" width="1" height="1" fill="#fff"/><rect x="7" y="8" width="1" height="1" fill="#808080"/><rect x="10" y="8" width="1" height="1" fill="#808080"/><rect x="11" y="8" width="1" height="1" fill="#fff"/><rect x="5" y="9" width="1" height="1" fill="#808080"/><rect x="7" y="9" width="1" height="1" fill="#808080"/><rect x="8" y="9" width="1" height="1" fill="#fff"/><rect x="9" y="9" width="1" height="1" fill="#808080"/><rect x="11" y="9" width="1" height="1" fill="#fff"/><rect x="0" y="10" width="2" height="1" fill="#808080"/><rect x="3" y="10" width="2" height="1" fill="#808080"/><rect x="6" y="10" width="3" height="1" fill="#808080"/><rect x="10" y="10" width="2" height="1" fill="#808080"/><rect x="13" y="10" width="2" height="1" fill="#808080"/><rect x="1" y="11" width="2" height="1" fill="#fff"/><rect x="4" y="11" width="2" height="1" fill="#fff"/><rect x="6" y="11" width="3" height="1" fill="#808080"/><rect x="9" y="11" width="1" height="1" fill="#fff"/><rect x="11" y="11" width="2" height="1" fill="#fff"/><rect x="14" y="11" width="2" height="1" fill="#fff"/><rect x="7" y="12" width="1" height="1" fill="#808080"/><rect x="8" y="12" width="2" height="1" fill="#fff"/><rect x="8" y="13" width="1" height="1" fill="#fff"/><rect x="7" y="14" width="1" height="1" fill="#808080"/><rect x="8" y="15" width="1" height="1" fill="#fff"/></svg></div>
<div class="tb" style="left:510px"><svg viewBox="0 0 16 15" shape-rendering="crispEdges"><rect x="7" y="2" width="1" height="1" fill="#808080"/><rect x="12" y="2" width="3" height="1" fill="#808080"/><rect x="8" y="3" width="1" height="1" fill="#fff"/><rect x="10" y="3" width="2" height="1" fill="#808080"/><rect x="13" y="3" width="3" height="1" fill="#fff"/><rect x="7" y="4" width="1" height="1" fill="#808080"/><rect x="9" y="4" width="1" height="1" fill="#808080"/><rect x="11" y="4" width="2" height="1" fill="#fff"/><rect x="8" y="5" width="1" height="1" fill="#808080"/><rect x="10" y="5" width="1" height="1" fill="#fff"/><rect x="7" y="6" width="2" height="1" fill="#808080"/><rect x="9" y="6" width="1" height="1" fill="#fff"/><rect x="0" y="7" width="2" height="1" fill="#808080"/><rect x="3" y="7" width="2" height="1" fill="#808080"/><rect x="6" y="7" width="3" height="1" fill="#808080"/><rect x="9" y="7" width="1" height="1" fill="#fff"/><rect x="10" y="7" width="2" height="1" fill="#808080"/><rect x="13" y="7" width="2" height="1" fill="#808080"/><rect x="1" y="8" width="2" height="1" fill="#fff"/><rect x="4" y="8" width="2" height="1" fill="#fff"/><rect x="6" y="8" width="2" height="1" fill="#808080"/><rect x="8" y="8" width="2" height="1" fill="#fff"/><rect x="11" y="8" width="2" height="1" fill="#fff"/><rect x="14" y="8" width="2" height="1" fill="#fff"/><rect x="6" y="9" width="2" height="1" fill="#808080"/><rect x="8" y="9" width="1" height="1" fill="#fff"/><rect x="5" y="10" width="1" height="1" fill="#808080"/><rect x="7" y="10" width="1" height="1" fill="#808080"/><rect x="8" y="10" width="1" height="1" fill="#fff"/><rect x="4" y="11" width="1" height="1" fill="#808080"/><rect x="6" y="11" width="1" height="1" fill="#fff"/><rect x="8" y="11" width="1" height="1" fill="#fff"/><rect x="2" y="12" width="2" height="1" fill="#808080"/><rect x="5" y="12" width="1" height="1" fill="#fff"/><rect x="7" y="12" width="1" height="1" fill="#808080"/><rect x="0" y="13" width="2" height="1" fill="#808080"/><rect x="3" y="13" width="2" height="1" fill="#fff"/><rect x="8" y="13" width="1" height="1" fill="#fff"/><rect x="1" y="14" width="2" height="1" fill="#fff"/><rect x="7" y="14" width="1" height="1" fill="#808080"/><rect x="8" y="15" width="1" height="1" fill="#fff"/></svg></div>
<div class="tb" style="left:533px"><svg viewBox="0 0 16 15" shape-rendering="crispEdges"><rect x="1" y="2" width="1" height="1" fill="#808080"/><rect x="11" y="2" width="1" height="1" fill="#808080"/><rect x="1" y="3" width="1" height="1" fill="#808080"/><rect x="2" y="3" width="1" height="1" fill="#fff"/><rect x="12" y="3" width="1" height="1" fill="#fff"/><rect x="2" y="4" width="1" height="1" fill="#808080"/><rect x="11" y="4" width="1" height="1" fill="#808080"/><rect x="2" y="5" width="1" height="1" fill="#808080"/><rect x="3" y="5" width="1" height="1" fill="#fff"/><rect x="8" y="5" width="1" height="1" fill="#808080"/><rect x="12" y="5" width="1" height="1" fill="#fff"/><rect x="3" y="6" width="1" height="1" fill="#808080"/><rect x="7" y="6" width="1" height="1" fill="#808080"/><rect x="9" y="6" width="1" height="1" fill="#808080"/><rect x="11" y="6" width="1" height="1" fill="#808080"/><rect x="3" y="7" width="1" height="1" fill="#808080"/><rect x="4" y="7" width="1" height="1" fill="#fff"/><rect x="7" y="7" width="1" height="1" fill="#808080"/><rect x="8" y="7" width="1" height="1" fill="#fff"/><rect x="9" y="7" width="1" height="1" fill="#808080"/><rect x="10" y="7" width="1" height="1" fill="#fff"/><rect x="12" y="7" width="1" height="1" fill="#fff"/><rect x="4" y="8" width="1" height="1" fill="#808080"/><rect x="6" y="8" width="1" height="1" fill="#808080"/><rect x="8" y="8" width="1" height="1" fill="#fff"/><rect x="10" y="8" width="2" height="1" fill="#808080"/><rect x="14" y="8" width="1" height="1" fill="#808080"/><rect x="4" y="9" width="1" height="1" fill="#808080"/><rect x="5" y="9" width="1" height="1" fill="#fff"/><rect x="6" y="9" width="1" height="1" fill="#808080"/><rect x="7" y="9" width="1" height="1" fill="#fff"/><rect x="10" y="9" width="3" height="1" fill="#808080"/><rect x="14" y="9" width="1" height="1" fill="#808080"/><rect x="15" y="9" width="1" height="1" fill="#fff"/><rect x="5" y="10" width="1" height="1" fill="#808080"/><rect x="7" y="10" width="1" height="1" fill="#fff"/><rect x="11" y="10" width="3" height="1" fill="#808080"/><rect x="15" y="10" width="1" height="1" fill="#fff"/><rect x="0" y="11" width="2" height="1" fill="#808080"/><rect x="3" y="11" width="2" height="1" fill="#808080"/><rect x="6" y="11" width="2" height="1" fill="#808080"/><rect x="9" y="11" width="7" height="1" fill="#808080"/><rect x="1" y="12" width="2" height="1" fill="#fff"/><rect x="4" y="12" width="2" height="1" fill="#fff"/><rect x="7" y="12" width="2" height="1" fill="#fff"/><rect x="10" y="12" width="1" height="1" fill="#fff"/><rect x="11" y="12" width="2" height="1" fill="#808080"/><rect x="13" y="12" width="4" height="1" fill="#fff"/><rect x="10" y="13" width="1" height="1" fill="#808080"/><rect x="12" y="13" width="1" height="1" fill="#808080"/><rect x="13" y="13" width="1" height="1" fill="#fff"/><rect x="14" y="13" width="1" height="1" fill="#808080"/><rect x="11" y="14" width="1" height="1" fill="#808080"/><rect x="13" y="14" width="1" height="1" fill="#fff"/><rect x="15" y="14" width="1" height="1" fill="#fff"/><rect x="12" y="15" width="1" height="1" fill="#fff"/></svg></div>
<div class="tb" style="left:556px"><svg viewBox="0 0 16 15" shape-rendering="crispEdges"><rect x="11" y="1" width="1" height="1" fill="#808080"/><rect x="10" y="2" width="3" height="1" fill="#808080"/><rect x="14" y="2" width="1" height="1" fill="#808080"/><rect x="0" y="3" width="2" height="1" fill="#808080"/><rect x="3" y="3" width="2" height="1" fill="#808080"/><rect x="6" y="3" width="2" height="1" fill="#808080"/><rect x="9" y="3" width="6" height="1" fill="#808080"/><rect x="15" y="3" width="1" height="1" fill="#fff"/><rect x="1" y="4" width="2" height="1" fill="#fff"/><rect x="4" y="4" width="2" height="1" fill="#fff"/><rect x="6" y="4" width="1" height="1" fill="#808080"/><rect x="7" y="4" width="2" height="1" fill="#fff"/><rect x="10" y="4" width="3" height="1" fill="#808080"/><rect x="13" y="4" width="3" height="1" fill="#fff"/><rect x="5" y="5" width="1" height="1" fill="#808080"/><rect x="7" y="5" width="1" height="1" fill="#808080"/><rect x="10" y="5" width="2" height="1" fill="#808080"/><rect x="12" y="5" width="2" height="1" fill="#fff"/><rect x="14" y="5" width="1" height="1" fill="#808080"/><rect x="5" y="6" width="1" height="1" fill="#808080"/><rect x="6" y="6" width="1" height="1" fill="#fff"/><rect x="7" y="6" width="1" height="1" fill="#808080"/><rect x="8" y="6" width="1" height="1" fill="#fff"/><rect x="9" y="6" width="1" height="1" fill="#808080"/><rect x="11" y="6" width="1" height="1" fill="#808080"/><rect x="12" y="6" width="1" height="1" fill="#fff"/><rect x="15" y="6" width="1" height="1" fill="#fff"/><rect x="4" y="7" width="1" height="1" fill="#808080"/><rect x="6" y="7" width="1" height="1" fill="#fff"/><rect x="8" y="7" width="1" height="1" fill="#808080"/><rect x="10" y="7" width="1" height="1" fill="#fff"/><rect x="12" y="7" width="1" height="1" fill="#fff"/><rect x="4" y="8" width="1" height="1" fill="#808080"/><rect x="5" y="8" width="1" height="1" fill="#fff"/><rect x="9" y="8" width="1" height="1" fill="#fff"/><rect x="11" y="8" width="1" height="1" fill="#808080"/><rect x="3" y="9" width="1" height="1" fill="#808080"/><rect x="5" y="9" width="1" height="1" fill="#fff"/><rect x="12" y="9" width="1" height="1" fill="#fff"/><rect x="3" y="10" width="1" height="1" fill="#808080"/><rect x="4" y="10" width="1" height="1" fill="#fff"/><rect x="11" y="10" width="1" height="1" fill="#808080"/><rect x="2" y="11" width="1" height="1" fill="#808080"/><rect x="4" y="11" width="1" height="1" fill="#fff"/><rect x="12" y="11" width="1" height="1" fill="#fff"/><rect x="2" y="12" width="1" height="1" fill="#808080"/><rect x="3" y="12" width="1" height="1" fill="#fff"/><rect x="11" y="12" width="1" height="1" fill="#808080"/><rect x="1" y="13" width="1" height="1" fill="#808080"/><rect x="3" y="13" width="1" height="1" fill="#fff"/><rect x="12" y="13" width="1" height="1" fill="#fff"/><rect x="2" y="14" width="1" height="1" fill="#fff"/></svg></div>
<div class="tb" style="left:579px"><svg viewBox="0 0 16 15" shape-rendering="crispEdges"><rect x="11" y="2" width="1" height="1" fill="#808080"/><rect x="1" y="3" width="1" height="1" fill="#808080"/><rect x="7" y="3" width="1" height="1" fill="#808080"/><rect x="12" y="3" width="1" height="1" fill="#fff"/><rect x="2" y="4" width="1" height="1" fill="#808080"/><rect x="5" y="4" width="4" height="1" fill="#808080"/><rect x="11" y="4" width="1" height="1" fill="#808080"/><rect x="3" y="5" width="1" height="1" fill="#808080"/><rect x="6" y="5" width="1" height="1" fill="#fff"/><rect x="7" y="5" width="1" height="1" fill="#808080"/><rect x="8" y="5" width="2" height="1" fill="#fff"/><rect x="12" y="5" width="1" height="1" fill="#fff"/><rect x="4" y="6" width="1" height="1" fill="#808080"/><rect x="8" y="6" width="1" height="1" fill="#fff"/><rect x="11" y="6" width="1" height="1" fill="#808080"/><rect x="13" y="6" width="1" height="1" fill="#808080"/><rect x="3" y="7" width="1" height="1" fill="#808080"/><rect x="5" y="7" width="1" height="1" fill="#fff"/><rect x="10" y="7" width="3" height="1" fill="#808080"/><rect x="14" y="7" width="1" height="1" fill="#fff"/><rect x="2" y="8" width="1" height="1" fill="#808080"/><rect x="4" y="8" width="1" height="1" fill="#fff"/><rect x="11" y="8" width="1" height="1" fill="#808080"/><rect x="12" y="8" width="2" height="1" fill="#fff"/><rect x="2" y="9" width="1" height="1" fill="#808080"/><rect x="3" y="9" width="1" height="1" fill="#fff"/><rect x="10" y="9" width="3" height="1" fill="#808080"/><rect x="3" y="10" width="1" height="1" fill="#808080"/><rect x="9" y="10" width="1" height="1" fill="#808080"/><rect x="11" y="10" width="1" height="1" fill="#808080"/><rect x="12" y="10" width="1" height="1" fill="#fff"/><rect x="13" y="10" width="1" height="1" fill="#808080"/><rect x="0" y="11" width="2" height="1" fill="#808080"/><rect x="3" y="11" width="2" height="1" fill="#808080"/><rect x="6" y="11" width="3" height="1" fill="#808080"/><rect x="10" y="11" width="1" height="1" fill="#fff"/><rect x="11" y="11" width="1" height="1" fill="#808080"/><rect x="12" y="11" width="1" height="1" fill="#fff"/><rect x="14" y="11" width="1" height="1" fill="#fff"/><rect x="1" y="12" width="2" height="1" fill="#fff"/><rect x="4" y="12" width="2" height="1" fill="#fff"/><rect x="7" y="12" width="3" height="1" fill="#fff"/><rect x="12" y="12" width="1" height="1" fill="#fff"/><rect x="11" y="13" width="1" height="1" fill="#808080"/><rect x="12" y="14" width="1" height="1" fill="#fff"/></svg></div>
<div class="tb" style="left:602px"><svg viewBox="0 0 16 15" shape-rendering="crispEdges"><rect x="3" y="1" width="3" height="1" fill="#808080"/><rect x="9" y="1" width="3" height="1" fill="#808080"/><rect x="2" y="2" width="2" height="1" fill="#808080"/><rect x="4" y="2" width="1" height="1" fill="#fff"/><rect x="5" y="2" width="1" height="1" fill="#808080"/><rect x="6" y="2" width="1" height="1" fill="#fff"/><rect x="9" y="2" width="1" height="1" fill="#808080"/><rect x="10" y="2" width="1" height="1" fill="#fff"/><rect x="11" y="2" width="2" height="1" fill="#808080"/><rect x="2" y="3" width="1" height="1" fill="#808080"/><rect x="3" y="3" width="1" height="1" fill="#fff"/><rect x="4" y="3" width="2" height="1" fill="#808080"/><rect x="6" y="3" width="1" height="1" fill="#fff"/><rect x="9" y="3" width="2" height="1" fill="#808080"/><rect x="12" y="3" width="1" height="1" fill="#808080"/><rect x="13" y="3" width="1" height="1" fill="#fff"/><rect x="2" y="4" width="1" height="1" fill="#808080"/><rect x="3" y="4" width="1" height="1" fill="#fff"/><rect x="4" y="4" width="2" height="1" fill="#808080"/><rect x="6" y="4" width="1" height="1" fill="#fff"/><rect x="9" y="4" width="2" height="1" fill="#808080"/><rect x="11" y="4" width="1" height="1" fill="#fff"/><rect x="12" y="4" width="1" height="1" fill="#808080"/><rect x="13" y="4" width="1" height="1" fill="#fff"/><rect x="1" y="5" width="2" height="1" fill="#808080"/><rect x="3" y="5" width="1" height="1" fill="#fff"/><rect x="4" y="5" width="3" height="1" fill="#808080"/><rect x="8" y="5" width="3" height="1" fill="#808080"/><rect x="11" y="5" width="1" height="1" fill="#fff"/><rect x="12" y="5" width="2" height="1" fill="#808080"/><rect x="1" y="6" width="1" height="1" fill="#808080"/><rect x="2" y="6" width="1" height="1" fill="#fff"/><rect x="3" y="6" width="4" height="1" fill="#808080"/><rect x="7" y="6" width="1" height="1" fill="#fff"/><rect x="8" y="6" width="4" height="1" fill="#808080"/><rect x="13" y="6" width="1" height="1" fill="#808080"/><rect x="14" y="6" width="1" height="1" fill="#fff"/><rect x="1" y="7" width="1" height="1" fill="#808080"/><rect x="2" y="7" width="1" height="1" fill="#fff"/><rect x="3" y="7" width="9" height="1" fill="#808080"/><rect x="12" y="7" width="1" height="1" fill="#fff"/><rect x="13" y="7" width="1" height="1" fill="#808080"/><rect x="14" y="7" width="1" height="1" fill="#fff"/><rect x="0" y="8" width="2" height="1" fill="#808080"/><rect x="2" y="8" width="1" height="1" fill="#fff"/><rect x="3" y="8" width="9" height="1" fill="#808080"/><rect x="12" y="8" width="1" height="1" fill="#fff"/><rect x="13" y="8" width="2" height="1" fill="#808080"/><rect x="0" y="9" width="1" height="1" fill="#808080"/><rect x="1" y="9" width="1" height="1" fill="#fff"/><rect x="2" y="9" width="11" height="1" fill="#808080"/><rect x="14" y="9" width="1" height="1" fill="#808080"/><rect x="15" y="9" width="1" height="1" fill="#fff"/><rect x="0" y="10" width="1" height="1" fill="#808080"/><rect x="1" y="10" width="1" height="1" fill="#fff"/><rect x="2" y="10" width="4" height="1" fill="#808080"/><rect x="6" y="10" width="3" height="1" fill="#fff"/><rect x="9" y="10" width="4" height="1" fill="#808080"/><rect x="13" y="10" width="1" height="1" fill="#fff"/><rect x="14" y="10" width="1" height="1" fill="#808080"/><rect x="15" y="10" width="1" height="1" fill="#fff"/><rect x="0" y="11" width="1" height="1" fill="#808080"/><rect x="1" y="11" width="1" height="1" fill="#fff"/><rect x="2" y="11" width="4" height="1" fill="#808080"/><rect x="6" y="11" width="1" height="1" fill="#fff"/><rect x="9" y="11" width="4" height="1" fill="#808080"/><rect x="13" y="11" width="1" height="1" fill="#fff"/><rect x="14" y="11" width="1" height="1" fill="#808080"/><rect x="15" y="11" width="1" height="1" fill="#fff"/><rect x="0" y="12" width="1" height="1" fill="#808080"/><rect x="1" y="12" width="1" height="1" fill="#fff"/><rect x="2" y="12" width="4" height="1" fill="#808080"/><rect x="6" y="12" width="1" height="1" fill="#fff"/><rect x="9" y="12" width="4" height="1" fill="#808080"/><rect x="13" y="12" width="1" height="1" fill="#fff"/><rect x="14" y="12" width="1" height="1" fill="#808080"/><rect x="15" y="12" width="1" height="1" fill="#fff"/><rect x="0" y="13" width="6" height="1" fill="#808080"/><rect x="6" y="13" width="1" height="1" fill="#fff"/><rect x="9" y="13" width="6" height="1" fill="#808080"/><rect x="15" y="13" width="1" height="1" fill="#fff"/><rect x="1" y="14" width="4" height="1" fill="#808080"/><rect x="5" y="14" width="2" height="1" fill="#fff"/><rect x="10" y="14" width="4" height="1" fill="#808080"/><rect x="14" y="14" width="2" height="1" fill="#fff"/><rect x="2" y="15" width="4" height="1" fill="#fff"/><rect x="11" y="15" width="4" height="1" fill="#fff"/></svg></div>
<div class="tb" style="left:625px"><svg viewBox="0 0 16 15" shape-rendering="crispEdges"><rect x="12" y="0" width="2" height="1" fill="#808080"/><rect x="12" y="1" width="2" height="1" fill="#808080"/><rect x="14" y="1" width="1" height="1" fill="#fff"/><rect x="2" y="2" width="6" height="1" fill="#808080"/><rect x="13" y="2" width="2" height="1" fill="#fff"/><rect x="2" y="3" width="6" height="1" fill="#808080"/><rect x="8" y="3" width="1" height="1" fill="#fff"/><rect x="12" y="3" width="2" height="1" fill="#808080"/><rect x="2" y="4" width="2" height="1" fill="#808080"/><rect x="4" y="4" width="2" height="1" fill="#fff"/><rect x="6" y="4" width="2" height="1" fill="#808080"/><rect x="8" y="4" width="1" height="1" fill="#fff"/><rect x="12" y="4" width="2" height="1" fill="#808080"/><rect x="14" y="4" width="1" height="1" fill="#fff"/><rect x="0" y="5" width="4" height="1" fill="#808080"/><rect x="4" y="5" width="1" height="1" fill="#fff"/><rect x="6" y="5" width="6" height="1" fill="#808080"/><rect x="13" y="5" width="2" height="1" fill="#fff"/><rect x="0" y="6" width="4" height="1" fill="#808080"/><rect x="4" y="6" width="1" height="1" fill="#fff"/><rect x="6" y="6" width="8" height="1" fill="#808080"/><rect x="1" y="7" width="4" height="1" fill="#fff"/><rect x="7" y="7" width="5" height="1" fill="#fff"/><rect x="12" y="7" width="2" height="1" fill="#808080"/><rect x="14" y="7" width="1" height="1" fill="#fff"/><rect x="13" y="8" width="2" height="1" fill="#fff"/><rect x="12" y="9" width="2" height="1" fill="#808080"/><rect x="8" y="10" width="1" height="1" fill="#808080"/><rect x="12" y="10" width="2" height="1" fill="#808080"/><rect x="14" y="10" width="1" height="1" fill="#fff"/><rect x="9" y="11" width="2" height="1" fill="#808080"/><rect x="13" y="11" width="2" height="1" fill="#fff"/><rect x="2" y="12" width="12" height="1" fill="#808080"/><rect x="3" y="13" width="6" height="1" fill="#fff"/><rect x="9" y="13" width="2" height="1" fill="#808080"/><rect x="11" y="13" width="1" height="1" fill="#fff"/><rect x="12" y="13" width="2" height="1" fill="#808080"/><rect x="14" y="13" width="1" height="1" fill="#fff"/><rect x="8" y="14" width="1" height="1" fill="#808080"/><rect x="10" y="14" width="2" height="1" fill="#fff"/><rect x="13" y="14" width="2" height="1" fill="#fff"/><rect x="9" y="15" width="1" height="1" fill="#fff"/></svg></div>
<div class="tb" style="left:648px"><svg viewBox="0 0 16 15" shape-rendering="crispEdges"><rect x="2" y="0" width="2" height="1" fill="#808080"/><rect x="2" y="1" width="2" height="1" fill="#808080"/><rect x="4" y="1" width="1" height="1" fill="#fff"/><rect x="3" y="2" width="2" height="1" fill="#fff"/><rect x="8" y="2" width="6" height="1" fill="#808080"/><rect x="2" y="3" width="2" height="1" fill="#808080"/><rect x="8" y="3" width="6" height="1" fill="#808080"/><rect x="14" y="3" width="1" height="1" fill="#fff"/><rect x="2" y="4" width="2" height="1" fill="#808080"/><rect x="4" y="4" width="1" height="1" fill="#fff"/><rect x="8" y="4" width="2" height="1" fill="#808080"/><rect x="10" y="4" width="2" height="1" fill="#fff"/><rect x="12" y="4" width="2" height="1" fill="#808080"/><rect x="14" y="4" width="1" height="1" fill="#fff"/><rect x="3" y="5" width="1" height="1" fill="#fff"/><rect x="4" y="5" width="6" height="1" fill="#808080"/><rect x="10" y="5" width="1" height="1" fill="#fff"/><rect x="12" y="5" width="4" height="1" fill="#808080"/><rect x="2" y="6" width="8" height="1" fill="#808080"/><rect x="10" y="6" width="1" height="1" fill="#fff"/><rect x="12" y="6" width="4" height="1" fill="#808080"/><rect x="16" y="6" width="1" height="1" fill="#fff"/><rect x="2" y="7" width="2" height="1" fill="#808080"/><rect x="4" y="7" width="7" height="1" fill="#fff"/><rect x="13" y="7" width="4" height="1" fill="#fff"/><rect x="3" y="8" width="2" height="1" fill="#fff"/><rect x="2" y="9" width="2" height="1" fill="#808080"/><rect x="2" y="10" width="2" height="1" fill="#808080"/><rect x="4" y="10" width="1" height="1" fill="#fff"/><rect x="7" y="10" width="1" height="1" fill="#808080"/><rect x="3" y="11" width="2" height="1" fill="#fff"/><rect x="5" y="11" width="2" height="1" fill="#808080"/><rect x="8" y="11" width="1" height="1" fill="#fff"/><rect x="2" y="12" width="12" height="1" fill="#808080"/><rect x="2" y="13" width="2" height="1" fill="#808080"/><rect x="4" y="13" width="1" height="1" fill="#fff"/><rect x="5" y="13" width="2" height="1" fill="#808080"/><rect x="7" y="13" width="8" height="1" fill="#fff"/><rect x="3" y="14" width="2" height="1" fill="#fff"/><rect x="6" y="14" width="1" height="1" fill="#fff"/><rect x="7" y="14" width="1" height="1" fill="#808080"/><rect x="8" y="15" width="1" height="1" fill="#fff"/></svg></div>
<div class="tb" style="left:679px"><svg viewBox="0 0 16 15" shape-rendering="crispEdges"><rect x="3" y="0" width="1" height="1" fill="#808080"/><rect x="5" y="0" width="3" height="1" fill="#808080"/><rect x="11" y="0" width="1" height="1" fill="#808080"/><rect x="13" y="0" width="1" height="1" fill="#808080"/><rect x="2" y="1" width="1" height="1" fill="#808080"/><rect x="4" y="1" width="1" height="1" fill="#fff"/><rect x="5" y="1" width="1" height="1" fill="#808080"/><rect x="6" y="1" width="1" height="1" fill="#fff"/><rect x="7" y="1" width="1" height="1" fill="#808080"/><rect x="8" y="1" width="1" height="1" fill="#fff"/><rect x="11" y="1" width="1" height="1" fill="#808080"/><rect x="12" y="1" width="1" height="1" fill="#fff"/><rect x="14" y="1" width="1" height="1" fill="#808080"/><rect x="2" y="2" width="1" height="1" fill="#808080"/><rect x="3" y="2" width="1" height="1" fill="#fff"/><rect x="5" y="2" width="1" height="1" fill="#808080"/><rect x="6" y="2" width="1" height="1" fill="#fff"/><rect x="7" y="2" width="1" height="1" fill="#808080"/><rect x="8" y="2" width="1" height="1" fill="#fff"/><rect x="11" y="2" width="1" height="1" fill="#808080"/><rect x="12" y="2" width="1" height="1" fill="#fff"/><rect x="14" y="2" width="1" height="1" fill="#808080"/><rect x="15" y="2" width="1" height="1" fill="#fff"/><rect x="2" y="3" width="1" height="1" fill="#808080"/><rect x="3" y="3" width="1" height="1" fill="#fff"/><rect x="5" y="3" width="3" height="1" fill="#808080"/><rect x="8" y="3" width="1" height="1" fill="#fff"/><rect x="9" y="3" width="1" height="1" fill="#808080"/><rect x="11" y="3" width="1" height="1" fill="#808080"/><rect x="12" y="3" width="1" height="1" fill="#fff"/><rect x="14" y="3" width="1" height="1" fill="#808080"/><rect x="15" y="3" width="1" height="1" fill="#fff"/><rect x="3" y="4" width="1" height="1" fill="#808080"/><rect x="6" y="4" width="3" height="1" fill="#fff"/><rect x="9" y="4" width="1" height="1" fill="#808080"/><rect x="10" y="4" width="1" height="1" fill="#fff"/><rect x="12" y="4" width="1" height="1" fill="#fff"/><rect x="13" y="4" width="1" height="1" fill="#808080"/><rect x="15" y="4" width="1" height="1" fill="#fff"/><rect x="4" y="5" width="1" height="1" fill="#fff"/><rect x="10" y="5" width="1" height="1" fill="#fff"/><rect x="14" y="5" width="1" height="1" fill="#fff"/><rect x="9" y="7" width="2" height="1" fill="#808080"/><rect x="8" y="8" width="2" height="1" fill="#808080"/><rect x="10" y="8" width="2" height="1" fill="#fff"/><rect x="6" y="9" width="3" height="1" fill="#808080"/><rect x="9" y="9" width="2" height="1" fill="#fff"/><rect x="5" y="10" width="3" height="1" fill="#808080"/><rect x="8" y="10" width="2" height="1" fill="#fff"/><rect x="4" y="11" width="4" height="1" fill="#808080"/><rect x="8" y="11" width="1" height="1" fill="#fff"/><rect x="3" y="12" width="2" height="1" fill="#808080"/><rect x="5" y="12" width="2" height="1" fill="#fff"/><rect x="7" y="12" width="2" height="1" fill="#808080"/><rect x="1" y="13" width="3" height="1" fill="#808080"/><rect x="4" y="13" width="2" height="1" fill="#fff"/><rect x="8" y="13" width="2" height="1" fill="#808080"/><rect x="0" y="14" width="2" height="1" fill="#808080"/><rect x="2" y="14" width="3" height="1" fill="#fff"/><rect x="9" y="14" width="6" height="1" fill="#808080"/><rect x="1" y="15" width="2" height="1" fill="#fff"/><rect x="10" y="15" width="6" height="1" fill="#fff"/></svg></div>
<div class="tb" style="left:702px"><svg viewBox="0 0 16 15" shape-rendering="crispEdges"><rect x="0" y="1" width="1" height="1" fill="#ff0000"/><rect x="0" y="2" width="2" height="1" fill="#ff0000"/><rect x="1" y="3" width="2" height="1" fill="#fff"/><rect x="2" y="4" width="2" height="1" fill="#fff"/><rect x="2" y="5" width="3" height="1" fill="#fff"/><rect x="3" y="6" width="2" height="1" fill="#ff0000"/><rect x="13" y="6" width="2" height="1" fill="#ff0000"/><rect x="3" y="7" width="3" height="1" fill="#ff0000"/><rect x="13" y="7" width="2" height="1" fill="#ff0000"/><rect x="4" y="8" width="2" height="1" fill="#fff"/><rect x="11" y="8" width="2" height="1" fill="#fff"/><rect x="4" y="9" width="3" height="1" fill="#fff"/><rect x="10" y="9" width="3" height="1" fill="#fff"/><rect x="5" y="10" width="3" height="1" fill="#ff0000"/><rect x="9" y="10" width="3" height="1" fill="#ff0000"/><rect x="6" y="11" width="4" height="1" fill="#ff0000"/></svg></div>
<div class="a" style="left:4px;top:65px;width:792px;height:393px;box-shadow:inset 1px 1px 0 #808080,inset -1px -1px 0 #fff,inset 2px 2px 0 #000,inset -2px -2px 0 #e4e4e4"></div>
<div class="a" style="left:5px;top:66px;width:778px;height:378px;background:#000"></div>
<div class="a" style="left:782px;top:66px;width:12px;height:327px;overflow:hidden"><div class="a" style="left:0;top:0;width:13px;height:2px;background:#000"></div><div class="dither" style="left:0;top:2px;width:13px;height:325px"></div><div class="sb" style="left:0;top:2px;width:13px;height:13px"><svg class="a" style="left:4px;top:5px" width="5" height="3" viewBox="0 0 5 3" shape-rendering="crispEdges"><path d="M2 0h1v1h1v1h1v1h-5v-1h1v-1h1z" fill="#000"/></svg></div><div class="sb" style="left:0;top:314px;width:13px;height:13px"><svg class="a" style="left:4px;top:5px" width="5" height="3" viewBox="0 0 5 3" shape-rendering="crispEdges"><path d="M0 0h5v1h-1v1h-1v1h-1v-1h-1v-1h-1z" fill="#000"/></svg></div><div class="sb" style="left:0;top:140px;width:13px;height:13px"></div></div>
<div class="a" style="left:783px;top:393px;width:11px;height:63px;background:#c0c0c0"></div>
<div class="a" style="left:6px;top:444px;width:63px;height:12px;background:#c0c0c0"></div>
<div class="a" style="left:69px;top:444px;width:1px;height:12px;background:#000"></div>
<div class="dither" style="left:70px;top:444px;width:713px;height:12px"></div>
<div class="sb" style="left:70px;top:444px;width:13px;height:12px"><svg class="a" style="left:4px;top:4px" width="3" height="5" viewBox="0 0 3 5" shape-rendering="crispEdges"><path d="M2 0h1v5h-1v-1h-1v-1h-1v-1h1v-1h1z" fill="#000"/></svg></div>
<div class="sb" style="left:770px;top:444px;width:13px;height:12px"><svg class="a" style="left:5px;top:4px" width="3" height="5" viewBox="0 0 3 5" shape-rendering="crispEdges"><path d="M0 0h1v1h1v1h1v1h-1v1h-1v1h-1z" fill="#000"/></svg></div>
<div class="sb" style="left:757px;top:444px;width:13px;height:12px"></div>
<div class="a" style="left:4px;top:460px;width:777px;height:16px;box-shadow:inset 1px 1px 0 #808080,inset -1px -1px 0 #fff"></div>
<svg class="a" style="left:783px;top:463px" width="13" height="13" viewBox="0 0 13 13"><path d="M12 1L1 12M12 5L5 12M12 9L9 12" stroke="#808080" stroke-width="1.6"/><path d="M12 0L0 12M12 4L4 12M12 8L8 12" stroke="#fff" stroke-width="1"/></svg>
<svg class="a" style="left:0;top:0" width="800" height="480" viewBox="0 0 800 480" shape-rendering="crispEdges">
<path d="M70.5 390.5V88" stroke="#c0c0c0" stroke-dasharray="5 3" fill="none"/>
<path d="M775.5 390.5V88" stroke="#c0c0c0" stroke-dasharray="5 3" fill="none"/>
<path d="M70 88.5H776" stroke="#c0c0c0" stroke-dasharray="5 3" fill="none"/>
<path d="M70 390.5H776" stroke="#c0c0c0" stroke-dasharray="5 3" fill="none"/>
<rect x="70" y="390" width="1" height="5" fill="#c0c0c0"/>
<rect x="211" y="390" width="1" height="5" fill="#c0c0c0"/>
<rect x="352" y="390" width="1" height="5" fill="#c0c0c0"/>
<rect x="493" y="390" width="1" height="5" fill="#c0c0c0"/>
<rect x="634" y="390" width="1" height="5" fill="#c0c0c0"/>
<rect x="775" y="390" width="1" height="5" fill="#c0c0c0"/>
<rect x="66" y="88" width="5" height="1" fill="#c0c0c0"/>
<rect x="66" y="239" width="5" height="1" fill="#c0c0c0"/>
<rect x="66" y="390" width="5" height="1" fill="#c0c0c0"/>
<rect x="105" y="239" width="1" height="1" fill="#c0c0c0"/>
<rect x="141" y="239" width="1" height="1" fill="#c0c0c0"/>
<rect x="176" y="239" width="1" height="1" fill="#c0c0c0"/>
<rect x="211" y="239" width="1" height="1" fill="#c0c0c0"/>
<rect x="246" y="239" width="1" height="1" fill="#c0c0c0"/>
<rect x="282" y="239" width="1" height="1" fill="#c0c0c0"/>
<rect x="317" y="239" width="1" height="1" fill="#c0c0c0"/>
<rect x="352" y="239" width="1" height="1" fill="#c0c0c0"/>
<rect x="387" y="239" width="1" height="1" fill="#c0c0c0"/>
<rect x="423" y="239" width="1" height="1" fill="#c0c0c0"/>
<rect x="458" y="239" width="1" height="1" fill="#c0c0c0"/>
<rect x="493" y="239" width="1" height="1" fill="#c0c0c0"/>
<rect x="528" y="239" width="1" height="1" fill="#c0c0c0"/>
<rect x="564" y="239" width="1" height="1" fill="#c0c0c0"/>
<rect x="599" y="239" width="1" height="1" fill="#c0c0c0"/>
<rect x="634" y="239" width="1" height="1" fill="#c0c0c0"/>
<rect x="669" y="239" width="1" height="1" fill="#c0c0c0"/>
<rect x="705" y="239" width="1" height="1" fill="#c0c0c0"/>
<rect x="740" y="239" width="1" height="1" fill="#c0c0c0"/>
<rect x="211" y="118" width="1" height="1" fill="#c0c0c0"/>
<rect x="211" y="148" width="1" height="1" fill="#c0c0c0"/>
<rect x="211" y="179" width="1" height="1" fill="#c0c0c0"/>
<rect x="211" y="209" width="1" height="1" fill="#c0c0c0"/>
<rect x="211" y="269" width="1" height="1" fill="#c0c0c0"/>
<rect x="211" y="299" width="1" height="1" fill="#c0c0c0"/>
<rect x="211" y="330" width="1" height="1" fill="#c0c0c0"/>
<rect x="211" y="360" width="1" height="1" fill="#c0c0c0"/>
<rect x="352" y="118" width="1" height="1" fill="#c0c0c0"/>
<rect x="352" y="148" width="1" height="1" fill="#c0c0c0"/>
<rect x="352" y="179" width="1" height="1" fill="#c0c0c0"/>
<rect x="352" y="209" width="1" height="1" fill="#c0c0c0"/>
<rect x="352" y="269" width="1" height="1" fill="#c0c0c0"/>
<rect x="352" y="299" width="1" height="1" fill="#c0c0c0"/>
<rect x="352" y="330" width="1" height="1" fill="#c0c0c0"/>
<rect x="352" y="360" width="1" height="1" fill="#c0c0c0"/>
<rect x="493" y="118" width="1" height="1" fill="#c0c0c0"/>
<rect x="493" y="148" width="1" height="1" fill="#c0c0c0"/>
<rect x="493" y="179" width="1" height="1" fill="#c0c0c0"/>
<rect x="493" y="209" width="1" height="1" fill="#c0c0c0"/>
<rect x="493" y="269" width="1" height="1" fill="#c0c0c0"/>
<rect x="493" y="299" width="1" height="1" fill="#c0c0c0"/>
<rect x="493" y="330" width="1" height="1" fill="#c0c0c0"/>
<rect x="493" y="360" width="1" height="1" fill="#c0c0c0"/>
<rect x="634" y="118" width="1" height="1" fill="#c0c0c0"/>
<rect x="634" y="148" width="1" height="1" fill="#c0c0c0"/>
<rect x="634" y="179" width="1" height="1" fill="#c0c0c0"/>
<rect x="634" y="209" width="1" height="1" fill="#c0c0c0"/>
<rect x="634" y="269" width="1" height="1" fill="#c0c0c0"/>
<rect x="634" y="299" width="1" height="1" fill="#c0c0c0"/>
<rect x="634" y="330" width="1" height="1" fill="#c0c0c0"/>
<rect x="634" y="360" width="1" height="1" fill="#c0c0c0"/>
<polyline points="70.0,175.5 72.4,157.2 73.0,174.5 75.4,156.8 76.0,173.5 78.4,156.4 79.0,172.5 81.4,156.0 82.0,171.5 84.4,155.6 85.0,170.5 87.4,155.2 88.0,169.3 90.4,154.8 91.0,168.1 93.4,154.4 94.0,166.9 96.4,154.0 97.0,165.7 99.4,153.6 100.0,164.5 102.4,153.0 103.0,163.0 105.4,152.4 106.0,161.5 108.4,151.8 109.0,160.0 111.4,151.2 112.0,158.5 114.4,150.6 115.0,157.0 117.4,150.0 118.0,155.5 120.4,149.4 121.0,154.0 123.4,148.7 124.0,152.3 126.4,148.0 127.0,150.7 129.4,147.3 130.0,149.1 132.4,146.6 133.0,147.5 133.0,146.5 134.0,150.5 146.5,156.5 147.0,161.5 148.0,172.5 149.0,194.5 150.0,219.5 151.0,240.5 152.0,267.5 153.0,283.5 154.0,299.5 155.0,322.5 156.0,344.5 157.0,367.5 157.5,377.5 158.0,374.5 159.0,361.5 160.0,340.5 161.0,325.5 162.0,316.5 163.0,307.5 164.0,283.5 165.0,262.5 165.7,252.5 166.3,252.5 167.0,263.5 168.0,283.5 169.0,306.5 170.0,330.5 171.0,346.5 171.4,349.5 172.0,335.5 173.0,312.5 174.0,292.5 175.0,277.5 175.5,273.5 176.0,285.5 177.0,320.5 177.5,333.5 178.0,320.5 179.0,300.5 180.0,287.5 180.5,287.5 181.5,326.5 183.5,292.5 185.0,323.5 187.0,295.5 188.5,322.5 191.0,298.5 192.5,322.5 193.5,300.9 195.9,322.7 196.5,303.0 198.9,322.9 199.5,304.9 201.9,323.1 202.5,306.0 204.9,323.2 205.5,307.1 207.9,323.3 208.5,308.2 210.9,323.5 211.5,309.3 213.9,323.8 214.5,311.0 216.9,324.3 217.5,312.9 219.9,324.7 220.5,314.7 222.9,325.2 223.5,316.6 225.9,325.8 226.5,318.0 228.9,326.8 229.5,319.0 231.9,327.8 232.5,320.0 234.9,328.8 235.5,321.0 237.9,329.7 238.5,322.1 240.9,330.4 241.5,323.2 243.9,331.1 244.5,324.4 246.9,331.8 247.5,325.5 249.9,332.5 250.5,326.7 252.9,333.2 253.5,327.8 255.9,334.0 256.5,328.9 259.0,333.5 272.0,322.5 273.5,310.5 274.5,292.5 275.5,271.5 276.5,248.5 277.5,226.5 278.5,205.5 279.5,183.5 280.5,162.5 281.5,140.5 282.5,119.5 283.5,94.5 284.5,110.5 285.5,130.5 286.5,145.5 287.5,162.5 288.5,181.5 289.5,200.5 290.5,219.5 291.5,224.5 292.5,200.5 293.5,175.5 294.5,150.5 295.5,139.5 296.5,160.5 297.5,185.5 298.5,203.5 299.5,175.5 300.5,152.5 301.0,151.5 302.5,180.5 303.5,195.5 304.5,170.5 305.5,152.5 306.5,175.5 307.5,189.5 309.0,156.5 310.5,184.5 312.0,156.6 312.6,183.4 315.0,156.8 315.6,181.9 318.0,156.9 318.6,180.4 321.0,157.0 321.6,178.8 324.0,157.0 324.6,177.0 327.0,157.0 327.6,175.2 330.0,157.0 330.6,173.5 333.0,157.0 333.6,172.3 336.0,156.9 336.6,171.1 339.0,156.2 339.6,169.9 342.0,155.5 342.6,168.7 345.0,154.8 345.6,167.5 348.0,154.1 348.6,166.3 351.0,153.4 351.6,165.1 354.0,152.8 354.6,163.9 357.0,152.2 357.6,162.7 360.0,151.6 360.6,161.5 363.0,151.0 363.6,160.3 366.0,150.4 366.6,159.1 369.0,149.8 369.6,157.9 372.0,149.1 372.6,156.8 375.0,148.2 375.6,155.8 378.0,147.3 378.6,154.8 381.0,146.4 381.6,153.8 384.0,145.5 384.6,152.8 387.0,144.6 388.0,154.5 389.5,150.5 399.0,156.5 398.5,156.5 399.0,161.5 400.0,172.5 401.0,194.5 402.0,219.5 403.0,240.5 404.0,267.5 405.0,283.5 406.0,299.5 407.0,322.5 408.0,344.5 409.0,367.5 409.5,383.5 410.0,380.5 411.0,361.5 412.0,340.5 413.0,325.5 414.0,316.5 415.0,307.5 416.0,285.2 417.0,265.4 417.7,256.2 418.3,256.2 419.0,266.4 420.0,285.2 421.0,306.5 422.0,330.5 423.0,346.5 423.4,349.5 424.0,335.5 425.0,312.5 426.0,294.0 427.0,280.2 427.5,276.2 428.0,287.6 429.0,320.5 429.5,333.5 430.0,320.5 431.0,300.5 432.0,287.5 432.5,287.5 433.5,326.5 435.5,292.5 437.0,323.5 439.0,295.5 440.5,322.5 443.0,298.5 444.5,322.5 445.5,300.9 447.9,322.7 448.5,303.0 450.9,322.9 451.5,304.9 453.9,323.1 454.5,306.0 456.9,323.2 457.5,307.1 459.9,323.3 460.5,308.2 462.9,323.5 463.5,309.3 465.9,323.8 466.5,311.0 468.9,324.3 469.5,312.9 471.9,324.7 472.5,314.7 474.9,325.2 475.5,316.6 477.9,325.8 478.5,318.0 480.9,326.8 481.5,319.0 483.9,327.8 484.5,320.0 486.9,328.8 487.5,321.0 489.9,329.7 490.5,322.1 492.9,330.4 493.5,323.2 495.9,331.1 496.5,324.4 498.9,331.8 499.5,325.5 501.9,332.5 511.0,333.5 524.0,322.5 526.5,310.5 527.5,292.5 528.5,271.5 529.5,248.5 530.5,226.5 531.5,205.5 532.5,183.5 533.5,162.5 534.5,140.5 535.5,119.5 536.5,99.5 537.5,110.5 538.5,130.5 539.5,145.5 540.5,162.5 541.5,181.5 542.5,200.5 543.5,215.5 544.5,220.5 545.5,200.5 546.5,175.5 547.5,150.5 548.5,139.5 549.5,160.5 550.5,185.5 551.5,203.5 552.5,175.5 553.5,152.5 554.0,151.5 555.5,180.5 556.5,195.5 557.5,170.5 558.5,152.5 559.5,175.5 560.5,189.5 562.0,156.5 563.5,184.5 565.0,156.6 565.6,181.4 568.0,156.8 568.6,179.4 571.0,156.9 571.6,177.8 574.0,157.0 574.6,176.4 577.0,157.0 577.6,175.2 580.0,157.0 580.6,173.8 583.0,157.0 583.6,172.4 586.0,157.0 586.6,170.8 589.0,156.9 589.6,169.1 592.0,156.4 592.6,167.5 595.0,155.9 595.6,166.4 598.0,155.4 598.6,165.4 601.0,154.9 601.6,164.4 604.0,154.4 604.6,163.3 607.0,153.8 607.6,162.0 610.0,153.1 610.6,160.7 613.0,152.5 613.6,159.3 616.0,151.9 616.6,157.7 619.0,151.5 619.6,155.6 622.0,151.1 627.5,150.5 630.5,151.5 637.5,148.5 640.5,148.5 650.5,156.5 650.0,156.5 651.0,165.5 652.0,179.5 653.0,205.5 654.0,229.5 655.0,246.5 656.0,263.5 657.0,283.5 658.0,300.5 659.0,320.5 660.0,340.5 661.0,360.5 662.0,378.5 662.4,381.5 663.0,370.5 664.0,352.5 665.0,335.5 666.0,316.5 667.0,296.5 668.0,276.5 669.0,263.5 669.5,260.5 670.0,264.5 671.0,285.5 672.0,312.5 673.0,334.5 673.4,339.5 674.0,325.5 675.0,300.5 676.0,281.5 676.3,278.5 677.0,295.5 678.0,320.5 678.5,328.5 679.5,305.5 681.2,285.5 683.3,326.5 685.4,292.5 687.0,323.5 688.5,295.5 690.0,323.5 691.3,298.0 693.0,322.5 694.0,299.5 696.4,322.7 697.0,300.4 699.4,322.9 700.0,301.2 702.4,323.1 703.0,302.1 705.4,323.3 706.0,302.9 708.4,323.5 709.0,304.0 711.4,323.8 712.0,305.5 714.4,324.0 715.0,307.0 717.4,324.3 718.0,308.5 720.4,324.6 721.0,310.1 723.4,325.0 724.0,312.0 726.4,325.5 727.0,313.8 729.4,325.9 730.0,315.7 732.4,326.4 733.0,317.5 735.4,327.2 736.0,318.5 738.4,328.1 739.0,319.5 741.4,328.9 742.0,320.5 744.4,329.8 745.0,321.5 747.4,330.6 748.0,322.8 750.4,331.4 751.0,324.0 753.4,332.1 754.0,325.2 756.4,332.9 757.0,326.5 759.4,333.5 760.0,328.2 762.4,334.2 763.0,329.9 764.5,333.5 775.5,323.5" fill="none" stroke="#55ff55" stroke-width="1"/>
<rect x="73.5" y="419.5" width="4" height="4" fill="none" stroke="#55ff55"/>
</svg>
<div class="t p" id="y0" style="left:39px;top:83px">50A</div>
<div class="t p" id="y1" style="left:47px;top:234px">0A</div>
<div class="t p" id="y2" style="left:32px;top:385px">-50A</div>
<div class="t p" id="x0" style="left:51.3px;top:400px">680us</div>
<div class="t p" id="x1" style="left:192.2px;top:400px">684us</div>
<div class="t p" id="x2" style="left:333.3px;top:400px">688us</div>
<div class="t p" id="x3" style="left:474.3px;top:400px">692us</div>
<div class="t p" id="x4" style="left:615.2px;top:400px">696us</div>
<div class="t p" id="x5" style="left:736.6px;top:400px">700us</div>
<div class="t p" id="leg" style="left:87px;top:415.5px">I(L1kg)</div>
<div class="t p" id="time" style="left:407px;top:430px">Time</div>
</body></html>
